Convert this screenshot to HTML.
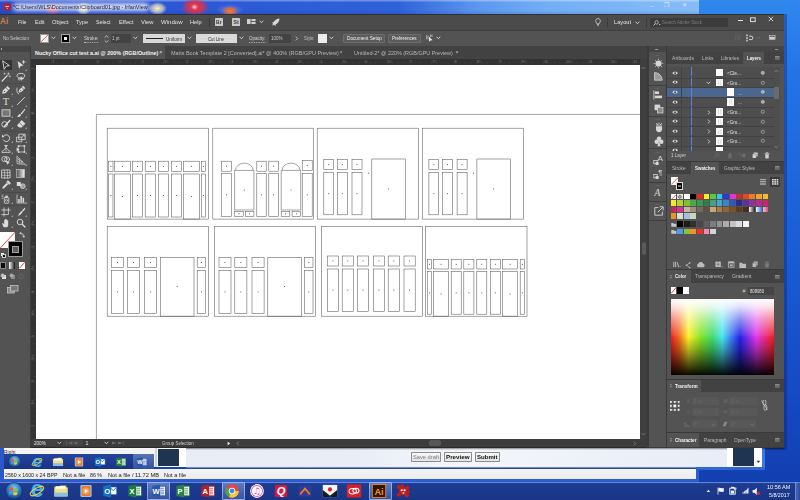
<!DOCTYPE html>
<html><head><meta charset="utf-8"><title>Clipboard01.jpg - IrfanView</title>
<style>
html,body{margin:0;padding:0;background:#1d55c4;}
#r{position:relative;width:800px;height:500px;overflow:hidden;font-family:"Liberation Sans",sans-serif;background:#1d55c4;}
#r div,#r svg{position:absolute;}
#r .t{white-space:nowrap;transform-origin:0 50%;}
</style></head><body><div id="r">
<div style="left:0.00px;top:0.00px;width:800.00px;height:500.00px;background:linear-gradient(180deg,#3088ee 0%,#2474e6 14%,#1a5ed6 48%,#1448c0 82%,#123ead 100%);"></div>
<div style="left:0.00px;top:0.00px;width:699.00px;height:14.50px;background:linear-gradient(90deg,#2a4ccc 0%,#2c58d6 30%,#2f62da 57%,#5a96ee 68%,#72aef6 78%,#86bcf8 100%);"></div>
<div style="left:0.00px;top:0.00px;width:699.00px;height:1.60px;background:linear-gradient(180deg,rgba(255,255,255,.38),rgba(255,255,255,.08));"></div>
<div style="left:0.00px;top:10.00px;width:699.00px;height:4.50px;background:linear-gradient(180deg,rgba(10,30,120,0),rgba(10,30,120,.18));"></div>
<div style="left:44.00px;top:3.00px;width:17.00px;height:12.00px;background:radial-gradient(closest-side,#e84870,#d8406890 60%,#c03c7000);"></div>
<div style="left:76.00px;top:2.00px;width:15.00px;height:13.00px;background:radial-gradient(closest-side,#f8f0c8,#f0e8b890 60%,#e8e0b000);"></div>
<div style="left:148.00px;top:2.00px;width:19.00px;height:13.00px;background:radial-gradient(closest-side,#f8f0c8,#f0e8b8a0 60%,#e8e0b000);"></div>
<div style="left:181.00px;top:-2.00px;width:28.00px;height:18.00px;background:radial-gradient(closest-side,#f03848,#e83040d0 55%,#d0304000);"></div>
<div style="left:191.00px;top:4.00px;width:7.00px;height:6.00px;background:radial-gradient(closest-side,#ffffffc0,#ffffff00);"></div>
<div style="left:216.00px;top:4.00px;width:28.00px;height:12.00px;background:radial-gradient(closest-side,#c8b8e070,#c0b0e000);"></div>
<div style="left:222.00px;top:6.00px;width:16.00px;height:10.00px;background:radial-gradient(closest-side,#f87830,#f06828c0 55%,#e0602000);"></div>
<div style="left:13.00px;top:3.20px;width:136.00px;height:7.60px;background:rgba(255,255,255,.78);border-radius:4px;filter:blur(2.2px);"></div>
<div class="t" style="left:13.00px;top:3.28px;height:7.44px;line-height:7.44px;font-size:6.2px;color:#101830;transform:scaleX(0.893);">*C:\Users\WLS\Documents\Clipboard01.jpg - IrfanView</div>
<div class="t" style="left:650.00px;top:2.90px;height:7.20px;line-height:7.20px;font-size:6px;color:#dfeeff;transform:scaleX(1.000);">–</div>
<div class="t" style="left:664.00px;top:2.40px;height:7.20px;line-height:7.20px;font-size:6px;color:#dfeeff;transform:scaleX(1.000);">❐</div>
<div class="t" style="left:682.00px;top:2.40px;height:7.20px;line-height:7.20px;font-size:6px;color:#dfeeff;transform:scaleX(1.000);">✕</div>
<div style="left:0.00px;top:14.00px;width:787.00px;height:436.00px;background:rgba(10,30,90,.35);"></div>
<div style="left:0.00px;top:14.20px;width:783.60px;height:433.40px;background:#535353;"></div>
<div style="left:0.00px;top:14.20px;width:783.60px;height:16.00px;background:#4b4b4b;"></div>
<div style="left:0.00px;top:14.20px;width:783.60px;height:0.70px;background:#303030;"></div>
<div style="left:0.00px;top:30.20px;width:783.60px;height:16.00px;background:#535353;border-top:0.5px solid #3e3e3e;"></div>
<div style="left:0.00px;top:46.20px;width:783.60px;height:401.40px;background:#3d3d3d;"></div>
<div class="t" style="left:0.00px;top:17.28px;height:9.84px;line-height:9.84px;font-size:8.2px;color:#c8825a;font-weight:bold;transform:scaleX(1.000);">Ai</div>
<div class="t" style="left:18.00px;top:18.70px;height:7.20px;line-height:7.20px;font-size:6px;color:#e4e4e4;transform:scaleX(0.879);">File</div>
<div class="t" style="left:34.50px;top:18.70px;height:7.20px;line-height:7.20px;font-size:6px;color:#e4e4e4;transform:scaleX(0.919);">Edit</div>
<div class="t" style="left:51.50px;top:18.70px;height:7.20px;line-height:7.20px;font-size:6px;color:#e4e4e4;transform:scaleX(0.952);">Object</div>
<div class="t" style="left:76.00px;top:18.70px;height:7.20px;line-height:7.20px;font-size:6px;color:#e4e4e4;transform:scaleX(0.923);">Type</div>
<div class="t" style="left:96.00px;top:18.70px;height:7.20px;line-height:7.20px;font-size:6px;color:#e4e4e4;transform:scaleX(0.870);">Select</div>
<div class="t" style="left:119.00px;top:18.70px;height:7.20px;line-height:7.20px;font-size:6px;color:#e4e4e4;transform:scaleX(0.952);">Effect</div>
<div class="t" style="left:141.00px;top:18.70px;height:7.20px;line-height:7.20px;font-size:6px;color:#e4e4e4;transform:scaleX(0.969);">View</div>
<div class="t" style="left:161.00px;top:18.70px;height:7.20px;line-height:7.20px;font-size:6px;color:#e4e4e4;transform:scaleX(1.008);">Window</div>
<div class="t" style="left:190.00px;top:18.70px;height:7.20px;line-height:7.20px;font-size:6px;color:#e4e4e4;transform:scaleX(0.932);">Help</div>
<div style="left:208.50px;top:18.00px;width:0.50px;height:9.00px;background:#3a3a3a;"></div>
<div style="left:215.00px;top:18.00px;width:8.20px;height:8.20px;background:#c9c9c9;border-radius:0.6px;"></div>
<div class="t" style="left:216.30px;top:19.18px;height:6.24px;line-height:6.24px;font-size:5.2px;color:#3a3a3a;font-weight:bold;transform:scaleX(0.969);">Br</div>
<div style="left:232.00px;top:18.00px;width:8.20px;height:8.20px;background:#c9c9c9;border-radius:0.6px;"></div>
<div class="t" style="left:233.60px;top:19.18px;height:6.24px;line-height:6.24px;font-size:5.2px;color:#3a3a3a;font-weight:bold;transform:scaleX(1.000);">St</div>
<svg style="left:247.00px;top:19.00px;" width="9" height="6" viewBox="0 0 9 6"><rect x="0" y="0" width="3.6" height="5" fill="#d0d0d0"/><rect x="4.4" y="0" width="4.2" height="2.1" fill="#d0d0d0"/><rect x="4.4" y="2.9" width="4.2" height="2.1" fill="#d0d0d0"/></svg>
<svg style="left:258.90px;top:20.00px;" width="5" height="4" viewBox="0 0 5 4"><path d="M0.5 0.8 L2.4 2.7 L4.3 0.8" fill="none" stroke="#e0e0e0" stroke-width="0.9"/></svg>
<svg style="left:270.50px;top:17.50px;" width="9" height="9" viewBox="0 0 9 9"><path d="M8.6 0.4 C6 0.6 3.6 2 2.2 4.4 L0.6 4.6 L2 5.6 L1.2 7.6 L3.4 6.8 L4.4 8.4 L4.6 6.6 C7 5.2 8.4 3 8.6 0.4 Z" fill="#d8d8d8"/></svg>
<svg style="left:594.50px;top:17.50px;" width="6" height="9" viewBox="0 0 6 9"><path d="M3 0.6 C1.4 0.6 0.6 1.8 0.6 2.9 C0.6 4 1.6 4.6 1.9 5.8 L4.1 5.8 C4.4 4.6 5.4 4 5.4 2.9 C5.4 1.8 4.6 0.6 3 0.6 Z" fill="none" stroke="#e0e0e0" stroke-width="0.7"/><path d="M2 6.6 L4 6.6 M2.4 7.6 L3.6 7.6" stroke="#e0e0e0" stroke-width="0.7"/></svg>
<div style="left:607.30px;top:17.50px;width:0.50px;height:10.00px;background:#3c3c3c;"></div>
<div class="t" style="left:613.80px;top:18.60px;height:7.20px;line-height:7.20px;font-size:6px;color:#e4e4e4;transform:scaleX(0.944);">Layout</div>
<svg style="left:635.20px;top:20.80px;" width="5" height="4" viewBox="0 0 5 4"><path d="M0.5 0.8 L2.4 2.7 L4.3 0.8" fill="none" stroke="#e0e0e0" stroke-width="0.9"/></svg>
<div style="left:645.50px;top:17.50px;width:0.50px;height:10.00px;background:#3c3c3c;"></div>
<div style="left:650.00px;top:18.00px;width:78.00px;height:9.00px;background:#3b3b3b;border-radius:0.5px;"></div>
<svg style="left:652.50px;top:19.50px;" width="8" height="6" viewBox="0 0 8 6"><circle cx="3.6" cy="2.4" r="1.7" fill="none" stroke="#d8d8d8" stroke-width="0.7"/><path d="M2.3 3.7 L0.5 5.5" stroke="#d8d8d8" stroke-width="0.8"/><path d="M5.8 4 L7.6 4 L6.7 5.2 Z" fill="#d8d8d8"/></svg>
<div class="t" style="left:661.50px;top:19.28px;height:6.24px;line-height:6.24px;font-size:5.2px;color:#7c7c7c;transform:scaleX(0.849);">Search Adobe Stock</div>
<div style="left:737.60px;top:20.20px;width:5.00px;height:1.20px;background:#e0e0e0;"></div>
<svg style="left:749.80px;top:16.60px;" width="6" height="6" viewBox="0 0 6 6"><rect x="0.6" y="0.8" width="4.6" height="3.8" fill="none" stroke="#e0e0e0" stroke-width="1"/></svg>
<svg style="left:767.80px;top:16.20px;" width="6" height="6" viewBox="0 0 6 6"><path d="M0.7 0.7 L5.1 5.1 M5.1 0.7 L0.7 5.1" stroke="#e4e4e4" stroke-width="0.9"/></svg>
<div class="t" style="left:3.00px;top:35.28px;height:6.24px;line-height:6.24px;font-size:5.2px;color:#c8c8c8;transform:scaleX(0.882);">No Selection</div>
<div style="left:40.00px;top:34.00px;width:9.00px;height:8.80px;background:#f8f8f8;border:0.4px solid #999;box-sizing:border-box;"></div>
<svg style="left:40.00px;top:34.00px;" width="9" height="9" viewBox="0 0 9 9"><path d="M0.6 8.2 L8.4 0.6" stroke="#d02020" stroke-width="0.7"/></svg>
<svg style="left:51.00px;top:36.40px;" width="5" height="4" viewBox="0 0 5 4"><path d="M0.5 0.8 L2.4 2.7 L4.3 0.8" fill="none" stroke="#e0e0e0" stroke-width="0.9"/></svg>
<div style="left:61.00px;top:33.80px;width:9.00px;height:9.00px;background:#000;border:0.5px solid #aaa;box-sizing:border-box;"></div>
<div style="left:64.20px;top:37.00px;width:2.60px;height:2.60px;background:#f0f0f0;"></div>
<svg style="left:71.80px;top:36.40px;" width="5" height="4" viewBox="0 0 5 4"><path d="M0.5 0.8 L2.4 2.7 L4.3 0.8" fill="none" stroke="#e0e0e0" stroke-width="0.9"/></svg>
<div class="t" style="left:84.00px;top:35.28px;height:6.24px;line-height:6.24px;font-size:5.2px;color:#d8d8d8;transform:scaleX(0.880);border-bottom:0.4px dotted #bbb;">Stroke:</div>
<svg style="left:103.50px;top:34.50px;" width="5" height="8" viewBox="0 0 5 8"><path d="M0.7 2.6 L2.5 0.8 L4.3 2.6 M0.7 5.4 L2.5 7.2 L4.3 5.4" fill="none" stroke="#d8d8d8" stroke-width="0.8"/></svg>
<div style="left:111.00px;top:34.00px;width:19.80px;height:8.60px;background:#434343;"></div>
<div class="t" style="left:112.30px;top:35.28px;height:6.24px;line-height:6.24px;font-size:5.2px;color:#c8c8c8;transform:scaleX(0.865);">1 pt</div>
<svg style="left:132.60px;top:36.40px;" width="5" height="4" viewBox="0 0 5 4"><path d="M0.5 0.8 L2.4 2.7 L4.3 0.8" fill="none" stroke="#e0e0e0" stroke-width="0.9"/></svg>
<div style="left:142.50px;top:33.80px;width:42.60px;height:9.40px;background:#d8d8d8;border-radius:0.5px;"></div>
<div style="left:145.50px;top:37.70px;width:17.50px;height:1.30px;background:#202020;"></div>
<div class="t" style="left:166.00px;top:35.60px;height:6.00px;line-height:6.00px;font-size:5px;color:#303030;transform:scaleX(0.914);">Uniform</div>
<svg style="left:186.80px;top:36.40px;" width="5" height="4" viewBox="0 0 5 4"><path d="M0.5 0.8 L2.4 2.7 L4.3 0.8" fill="none" stroke="#e0e0e0" stroke-width="0.9"/></svg>
<div style="left:196.00px;top:33.80px;width:41.00px;height:9.40px;background:#dadada;border-radius:0.5px;"></div>
<div class="t" style="left:208.00px;top:35.60px;height:6.00px;line-height:6.00px;font-size:5px;color:#303030;transform:scaleX(0.859);">Cut Line</div>
<svg style="left:238.80px;top:36.40px;" width="5" height="4" viewBox="0 0 5 4"><path d="M0.5 0.8 L2.4 2.7 L4.3 0.8" fill="none" stroke="#e0e0e0" stroke-width="0.9"/></svg>
<div class="t" style="left:249.00px;top:35.28px;height:6.24px;line-height:6.24px;font-size:5.2px;color:#d8d8d8;transform:scaleX(0.865);border-bottom:0.4px dotted #bbb;">Opacity:</div>
<div style="left:269.00px;top:34.00px;width:21.60px;height:8.60px;background:#434343;"></div>
<div class="t" style="left:270.60px;top:35.28px;height:6.24px;line-height:6.24px;font-size:5.2px;color:#c8c8c8;transform:scaleX(0.865);">100%</div>
<svg style="left:294.60px;top:36.00px;" width="4" height="5" viewBox="0 0 4 5"><path d="M0.8 0.6 L2.7 2.5 L0.8 4.4" fill="none" stroke="#d8d8d8" stroke-width="0.8"/></svg>
<div class="t" style="left:303.80px;top:35.28px;height:6.24px;line-height:6.24px;font-size:5.2px;color:#c0c0c0;transform:scaleX(0.800);">Style:</div>
<div style="left:318.00px;top:33.80px;width:9.20px;height:9.00px;background:#ececec;"></div>
<svg style="left:329.20px;top:36.40px;" width="5" height="4" viewBox="0 0 5 4"><path d="M0.5 0.8 L2.4 2.7 L4.3 0.8" fill="none" stroke="#e0e0e0" stroke-width="0.9"/></svg>
<div style="left:343.00px;top:33.80px;width:42.00px;height:9.20px;background:#5c5c5c;border:0.4px solid #6c6c6c;box-sizing:border-box;border-radius:1px;"></div>
<div class="t" style="left:346.60px;top:35.38px;height:6.24px;line-height:6.24px;font-size:5.2px;color:#f0f0f0;transform:scaleX(0.904);">Document Setup</div>
<div style="left:387.80px;top:33.80px;width:32.80px;height:9.20px;background:#5c5c5c;border:0.4px solid #6c6c6c;box-sizing:border-box;border-radius:1px;"></div>
<div class="t" style="left:392.00px;top:35.38px;height:6.24px;line-height:6.24px;font-size:5.2px;color:#f0f0f0;transform:scaleX(0.877);">Preferences</div>
<svg style="left:426.00px;top:34.00px;" width="8" height="9" viewBox="0 0 8 9"><path d="M0.6 1.4 L0.6 5.4 M2 1.4 L2 5.4 M4.6 0.4 L4.6 3 M6 0.4 L6 3" stroke="#cfcfcf" stroke-width="0.7"/><path d="M3 2.6 L3 7.8 L4.4 6.4 L6.6 6.2 Z" fill="#e6e6e6"/></svg>
<svg style="left:435.80px;top:35.60px;" width="5" height="4" viewBox="0 0 5 4"><path d="M0.5 0.8 L2.4 2.7 L4.3 0.8" fill="none" stroke="#e0e0e0" stroke-width="0.9"/></svg>
<svg style="left:734.50px;top:34.00px;" width="6" height="7" viewBox="0 0 6 7"><path d="M0.8 0.6 V6.4 M3 0.6 V6.4" stroke="#6c6c6c" stroke-width="0.8" stroke-dasharray="1.2 1"/><path d="M4.6 0.6 V6.4" stroke="#6c6c6c" stroke-width="0.6"/></svg>
<svg style="left:746.00px;top:33.80px;" width="9" height="8" viewBox="0 0 9 8"><path d="M1 0.6 V7.4" stroke="#e4e4e4" stroke-width="1.3" stroke-dasharray="1.7 0.9"/><path d="M3 2.2 H5.2 A1.7 1.7 0 0 1 5.2 5.6 H3" fill="none" stroke="#e4e4e4" stroke-width="0.9"/></svg>
<svg style="left:756.20px;top:35.60px;" width="5" height="4" viewBox="0 0 5 4"><path d="M0.5 0.8 L2.4 2.7 L4.3 0.8" fill="none" stroke="#777" stroke-width="0.9"/></svg>
<svg style="left:769.00px;top:35.20px;" width="7" height="5" viewBox="0 0 7 5"><rect x="0.3" y="0.3" width="5.8" height="4" fill="none" stroke="#d8d8d8" stroke-width="0.6"/><rect x="0.6" y="1.8" width="5.2" height="2.4" fill="#d0d0d0"/></svg>
<div style="left:0.00px;top:46.20px;width:29.50px;height:401.40px;background:#535353;"></div>
<div style="left:0.00px;top:46.20px;width:29.50px;height:5.60px;background:#454545;"></div>
<div style="left:1.20px;top:48.00px;width:0.50px;height:1.60px;background:#aaa;"></div>
<div style="left:0.00px;top:60.40px;width:12.00px;height:9.80px;background:#353535;"></div>
<div style="left:31.00px;top:46.20px;width:616.00px;height:13.20px;background:#424242;"></div>
<div style="left:31.00px;top:46.20px;width:134.00px;height:13.20px;background:#535353;"></div>
<div class="t" style="left:35.00px;top:49.66px;height:6.48px;line-height:6.48px;font-size:5.4px;color:#f2f2f2;font-weight:bold;transform:scaleX(1.000);">Nucky Office cut test a.ai @ 200% (RGB/Outline)</div>
<div class="t" style="left:159.30px;top:48.60px;height:6.00px;line-height:6.00px;font-size:5px;color:#e0e0e0;transform:scaleX(1.000);">×</div>
<div class="t" style="left:170.50px;top:49.66px;height:6.48px;line-height:6.48px;font-size:5.4px;color:#b8b8b8;transform:scaleX(1.018);">Matts Book Template 2 [Converted].ai* @ 400% (RGB/GPU Preview)</div>
<div class="t" style="left:339.60px;top:48.60px;height:6.00px;line-height:6.00px;font-size:5px;color:#b8b8b8;transform:scaleX(1.000);">×</div>
<div class="t" style="left:354.00px;top:49.66px;height:6.48px;line-height:6.48px;font-size:5.4px;color:#b8b8b8;transform:scaleX(1.008);">Untitled-2* @ 220% (RGB/GPU Preview)</div>
<div class="t" style="left:455.60px;top:48.80px;height:6.00px;line-height:6.00px;font-size:5px;color:#c8c8c8;transform:scaleX(1.000);">×</div>
<div style="left:31.00px;top:59.40px;width:609.20px;height:5.20px;background:#333333;"></div>
<div style="left:31.00px;top:59.40px;width:4.80px;height:379.60px;background:#333333;"></div>
<div style="left:35.80px;top:64.60px;width:604.40px;height:374.40px;background:#ffffff;"></div>
<div style="left:640.20px;top:59.40px;width:6.80px;height:387.40px;background:#3f3f3f;"></div>
<div style="left:31.00px;top:439.00px;width:616.00px;height:7.80px;background:#3c3c3c;"></div>
<div style="left:31.00px;top:446.80px;width:752.60px;height:0.80px;background:#2a2a2a;"></div>
<svg style="left:641.00px;top:66.00px;" width="5" height="4" viewBox="0 0 5 4"><path d="M0.5 3 L2.4 1.1 L4.3 3" fill="none" stroke="#8a8a8a" stroke-width="0.7"/></svg>
<svg style="left:641.00px;top:432.00px;" width="5" height="4" viewBox="0 0 5 4"><path d="M0.5 1 L2.4 2.9 L4.3 1" fill="none" stroke="#8a8a8a" stroke-width="0.7"/></svg>
<div style="left:641.60px;top:242.00px;width:4.00px;height:12.50px;background:#5a5a5a;border-radius:2px;"></div>
<div style="left:429.00px;top:440.40px;width:12.00px;height:5.20px;background:#585858;border-radius:2.6px;"></div>
<svg style="left:633.00px;top:440.60px;" width="4" height="5" viewBox="0 0 4 5"><path d="M0.8 0.6 L2.7 2.5 L0.8 4.4" fill="none" stroke="#8a8a8a" stroke-width="0.7"/></svg>
<div style="left:32.00px;top:439.60px;width:25.00px;height:6.80px;background:#424242;"></div>
<div class="t" style="left:33.80px;top:440.38px;height:6.24px;line-height:6.24px;font-size:5.2px;color:#e8e8e8;transform:scaleX(0.887);">200%</div>
<svg style="left:57.40px;top:441.40px;" width="5" height="4" viewBox="0 0 5 4"><path d="M0.5 0.8 L2.4 2.7 L4.3 0.8" fill="none" stroke="#e0e0e0" stroke-width="0.9"/></svg>
<div style="left:63.00px;top:439.60px;width:19.50px;height:6.60px;background:#464646;"></div>
<div class="t" style="left:66.00px;top:440.48px;height:5.04px;line-height:5.04px;font-size:4.2px;color:#6a6a6a;transform:scaleX(1.402);">|◀ ◀</div>
<div class="t" style="left:85.60px;top:440.38px;height:6.24px;line-height:6.24px;font-size:5.2px;color:#e8e8e8;transform:scaleX(1.000);">1</div>
<svg style="left:104.40px;top:441.40px;" width="5" height="4" viewBox="0 0 5 4"><path d="M0.5 0.8 L2.4 2.7 L4.3 0.8" fill="none" stroke="#e0e0e0" stroke-width="0.9"/></svg>
<div class="t" style="left:112.00px;top:440.48px;height:5.04px;line-height:5.04px;font-size:4.2px;color:#6a6a6a;transform:scaleX(1.519);">▶ ▶|</div>
<div class="t" style="left:162.00px;top:440.00px;height:6.00px;line-height:6.00px;font-size:5px;color:#d0d0d0;transform:scaleX(0.881);">Group Selection</div>
<svg style="left:227.20px;top:440.60px;" width="4" height="5" viewBox="0 0 4 5"><path d="M0.6 0.4 L3.2 2.5 L0.6 4.6 Z" fill="#e4e4e4"/></svg>
<svg style="left:235.60px;top:440.60px;" width="4" height="5" viewBox="0 0 4 5"><path d="M2.8 0.6 L1 2.5 L2.8 4.4" fill="none" stroke="#a0a0a0" stroke-width="0.7"/></svg>
<svg style="left:0.00px;top:0.00px;" width="800" height="500" viewBox="0 0 800 500"><g fill="none" stroke="#5a5a5a" stroke-width="0.55"><path d="M96.4 439 V114.4 H640.2"/><rect x="107.20" y="128.20" width="101.30" height="90.90"/><rect x="108.70" y="161.20" width="4.30" height="10.40"/><rect x="110.40" y="165.95" width="0.9" height="0.9" fill="#3a3a3a" stroke="none"/><rect x="108.70" y="174.00" width="4.30" height="43.00"/><rect x="110.40" y="195.05" width="0.9" height="0.9" fill="#3a3a3a" stroke="none"/><rect x="114.40" y="161.20" width="15.90" height="10.40"/><rect x="121.90" y="165.95" width="0.9" height="0.9" fill="#3a3a3a" stroke="none"/><rect x="114.40" y="174.00" width="15.90" height="45.10"/><rect x="121.90" y="196.10" width="0.9" height="0.9" fill="#3a3a3a" stroke="none"/><rect x="132.30" y="161.20" width="10.30" height="10.40"/><rect x="137.00" y="165.95" width="0.9" height="0.9" fill="#3a3a3a" stroke="none"/><rect x="132.30" y="174.00" width="10.30" height="43.00"/><rect x="137.00" y="195.05" width="0.9" height="0.9" fill="#3a3a3a" stroke="none"/><rect x="145.20" y="161.20" width="10.40" height="10.40"/><rect x="149.95" y="165.95" width="0.9" height="0.9" fill="#3a3a3a" stroke="none"/><rect x="145.20" y="174.00" width="10.40" height="43.00"/><rect x="149.95" y="195.05" width="0.9" height="0.9" fill="#3a3a3a" stroke="none"/><rect x="158.40" y="161.20" width="10.10" height="10.40"/><rect x="163.00" y="165.95" width="0.9" height="0.9" fill="#3a3a3a" stroke="none"/><rect x="158.40" y="174.00" width="10.10" height="43.00"/><rect x="163.00" y="195.05" width="0.9" height="0.9" fill="#3a3a3a" stroke="none"/><rect x="171.40" y="161.20" width="10.00" height="10.40"/><rect x="175.95" y="165.95" width="0.9" height="0.9" fill="#3a3a3a" stroke="none"/><rect x="171.40" y="174.00" width="10.00" height="43.00"/><rect x="175.95" y="195.05" width="0.9" height="0.9" fill="#3a3a3a" stroke="none"/><rect x="183.40" y="161.20" width="15.90" height="10.40"/><rect x="190.90" y="165.95" width="0.9" height="0.9" fill="#3a3a3a" stroke="none"/><rect x="183.40" y="174.00" width="15.90" height="45.10"/><rect x="190.90" y="196.10" width="0.9" height="0.9" fill="#3a3a3a" stroke="none"/><rect x="201.30" y="161.20" width="4.30" height="10.40"/><rect x="203.00" y="165.95" width="0.9" height="0.9" fill="#3a3a3a" stroke="none"/><rect x="201.30" y="174.00" width="4.30" height="43.00"/><rect x="203.00" y="195.05" width="0.9" height="0.9" fill="#3a3a3a" stroke="none"/><rect x="212.80" y="128.20" width="100.90" height="90.90"/><rect x="221.40" y="161.20" width="10.10" height="10.00"/><rect x="226.00" y="165.75" width="0.9" height="0.9" fill="#3a3a3a" stroke="none"/><rect x="221.40" y="173.40" width="10.10" height="42.90"/><rect x="226.00" y="194.40" width="0.9" height="0.9" fill="#3a3a3a" stroke="none"/><rect x="256.80" y="161.20" width="9.40" height="10.00"/><rect x="261.05" y="165.75" width="0.9" height="0.9" fill="#3a3a3a" stroke="none"/><rect x="256.80" y="173.40" width="9.40" height="42.90"/><rect x="261.05" y="194.40" width="0.9" height="0.9" fill="#3a3a3a" stroke="none"/><rect x="268.80" y="161.20" width="9.50" height="10.00"/><rect x="273.10" y="165.75" width="0.9" height="0.9" fill="#3a3a3a" stroke="none"/><rect x="268.80" y="173.40" width="9.50" height="42.90"/><rect x="273.10" y="194.40" width="0.9" height="0.9" fill="#3a3a3a" stroke="none"/><rect x="302.20" y="160.60" width="10.00" height="10.00"/><rect x="306.75" y="165.15" width="0.9" height="0.9" fill="#3a3a3a" stroke="none"/><rect x="302.20" y="173.40" width="10.00" height="42.90"/><rect x="306.75" y="194.40" width="0.9" height="0.9" fill="#3a3a3a" stroke="none"/><path d="M234.6 170.4 H253.9 V210 H234.6 Z"/><path d="M235.50 170.4 A8.85 7.3 0 0 1 253.20 170.4"/><rect x="243.80" y="189.55" width="0.9" height="0.9" fill="#3a3a3a" stroke="none"/><rect x="234.60" y="211.40" width="8.60" height="4.90"/><rect x="238.45" y="213.40" width="0.9" height="0.9" fill="#3a3a3a" stroke="none"/><rect x="245.30" y="211.40" width="8.60" height="4.90"/><rect x="249.15" y="213.40" width="0.9" height="0.9" fill="#3a3a3a" stroke="none"/><path d="M281.2 170.4 H300.7 V210 H281.2 Z"/><path d="M282.10 170.4 A8.95 7.3 0 0 1 300.00 170.4"/><rect x="290.50" y="189.55" width="0.9" height="0.9" fill="#3a3a3a" stroke="none"/><rect x="281.20" y="211.40" width="8.60" height="4.90"/><rect x="285.05" y="213.40" width="0.9" height="0.9" fill="#3a3a3a" stroke="none"/><rect x="292.10" y="211.40" width="8.60" height="4.90"/><rect x="295.95" y="213.40" width="0.9" height="0.9" fill="#3a3a3a" stroke="none"/><rect x="317.20" y="128.20" width="101.50" height="90.90"/><rect x="323.80" y="159.60" width="9.80" height="10.10"/><rect x="328.25" y="164.20" width="0.9" height="0.9" fill="#3a3a3a" stroke="none"/><rect x="323.80" y="172.60" width="9.80" height="42.20"/><rect x="328.25" y="193.25" width="0.9" height="0.9" fill="#3a3a3a" stroke="none"/><rect x="337.30" y="159.60" width="10.10" height="10.10"/><rect x="341.90" y="164.20" width="0.9" height="0.9" fill="#3a3a3a" stroke="none"/><rect x="337.30" y="172.60" width="10.10" height="42.20"/><rect x="341.90" y="193.25" width="0.9" height="0.9" fill="#3a3a3a" stroke="none"/><rect x="352.00" y="159.60" width="10.00" height="10.10"/><rect x="356.55" y="164.20" width="0.9" height="0.9" fill="#3a3a3a" stroke="none"/><rect x="352.00" y="172.60" width="10.00" height="42.20"/><rect x="356.55" y="193.25" width="0.9" height="0.9" fill="#3a3a3a" stroke="none"/><rect x="371.80" y="159.00" width="33.70" height="60.10"/><rect x="388.15" y="188.55" width="0.9" height="0.9" fill="#3a3a3a" stroke="none"/><rect x="367.95" y="172.75" width="0.9" height="0.9" fill="#3a3a3a" stroke="none"/><rect x="422.70" y="128.20" width="100.90" height="90.90"/><rect x="428.90" y="159.60" width="9.80" height="10.10"/><rect x="433.35" y="164.20" width="0.9" height="0.9" fill="#3a3a3a" stroke="none"/><rect x="428.90" y="172.60" width="9.80" height="42.20"/><rect x="433.35" y="193.25" width="0.9" height="0.9" fill="#3a3a3a" stroke="none"/><rect x="442.40" y="159.60" width="10.10" height="10.10"/><rect x="447.00" y="164.20" width="0.9" height="0.9" fill="#3a3a3a" stroke="none"/><rect x="442.40" y="172.60" width="10.10" height="42.20"/><rect x="447.00" y="193.25" width="0.9" height="0.9" fill="#3a3a3a" stroke="none"/><rect x="457.10" y="159.60" width="10.00" height="10.10"/><rect x="461.65" y="164.20" width="0.9" height="0.9" fill="#3a3a3a" stroke="none"/><rect x="457.10" y="172.60" width="10.00" height="42.20"/><rect x="461.65" y="193.25" width="0.9" height="0.9" fill="#3a3a3a" stroke="none"/><rect x="476.90" y="159.00" width="33.70" height="60.10"/><rect x="493.25" y="188.55" width="0.9" height="0.9" fill="#3a3a3a" stroke="none"/><rect x="473.05" y="172.75" width="0.9" height="0.9" fill="#3a3a3a" stroke="none"/><rect x="107.20" y="226.50" width="101.30" height="89.70"/><rect x="111.60" y="257.60" width="12.00" height="9.70"/><rect x="117.15" y="262.00" width="0.9" height="0.9" fill="#3a3a3a" stroke="none"/><rect x="111.60" y="270.50" width="12.00" height="42.80"/><rect x="117.15" y="291.45" width="0.9" height="0.9" fill="#3a3a3a" stroke="none"/><rect x="127.40" y="257.60" width="12.10" height="9.70"/><rect x="133.00" y="262.00" width="0.9" height="0.9" fill="#3a3a3a" stroke="none"/><rect x="127.40" y="270.50" width="12.10" height="42.80"/><rect x="133.00" y="291.45" width="0.9" height="0.9" fill="#3a3a3a" stroke="none"/><rect x="144.60" y="257.60" width="12.10" height="9.70"/><rect x="150.20" y="262.00" width="0.9" height="0.9" fill="#3a3a3a" stroke="none"/><rect x="144.60" y="270.50" width="12.10" height="42.80"/><rect x="150.20" y="291.45" width="0.9" height="0.9" fill="#3a3a3a" stroke="none"/><rect x="197.20" y="257.60" width="8.40" height="9.70"/><rect x="200.95" y="262.00" width="0.9" height="0.9" fill="#3a3a3a" stroke="none"/><rect x="197.20" y="270.50" width="8.40" height="42.80"/><rect x="200.95" y="291.45" width="0.9" height="0.9" fill="#3a3a3a" stroke="none"/><rect x="160.40" y="257.60" width="33.60" height="58.60"/><rect x="176.75" y="286.05" width="0.9" height="0.9" fill="#3a3a3a" stroke="none"/><rect x="214.50" y="226.50" width="101.20" height="89.70"/><rect x="219.00" y="257.60" width="12.00" height="9.70"/><rect x="224.55" y="262.00" width="0.9" height="0.9" fill="#3a3a3a" stroke="none"/><rect x="219.00" y="270.50" width="12.00" height="42.80"/><rect x="224.55" y="291.45" width="0.9" height="0.9" fill="#3a3a3a" stroke="none"/><rect x="234.80" y="257.60" width="12.10" height="9.70"/><rect x="240.40" y="262.00" width="0.9" height="0.9" fill="#3a3a3a" stroke="none"/><rect x="234.80" y="270.50" width="12.10" height="42.80"/><rect x="240.40" y="291.45" width="0.9" height="0.9" fill="#3a3a3a" stroke="none"/><rect x="252.00" y="257.60" width="12.10" height="9.70"/><rect x="257.60" y="262.00" width="0.9" height="0.9" fill="#3a3a3a" stroke="none"/><rect x="252.00" y="270.50" width="12.10" height="42.80"/><rect x="257.60" y="291.45" width="0.9" height="0.9" fill="#3a3a3a" stroke="none"/><rect x="304.60" y="257.60" width="8.40" height="9.70"/><rect x="308.35" y="262.00" width="0.9" height="0.9" fill="#3a3a3a" stroke="none"/><rect x="304.60" y="270.50" width="8.40" height="42.80"/><rect x="308.35" y="291.45" width="0.9" height="0.9" fill="#3a3a3a" stroke="none"/><rect x="267.80" y="257.60" width="33.60" height="58.60"/><rect x="284.15" y="286.05" width="0.9" height="0.9" fill="#3a3a3a" stroke="none"/><rect x="321.50" y="226.50" width="101.20" height="89.70"/><rect x="327.30" y="256.00" width="11.20" height="10.00"/><rect x="332.45" y="260.55" width="0.9" height="0.9" fill="#3a3a3a" stroke="none"/><rect x="327.30" y="269.00" width="11.20" height="42.30"/><rect x="332.45" y="289.70" width="0.9" height="0.9" fill="#3a3a3a" stroke="none"/><rect x="342.20" y="256.00" width="11.20" height="10.00"/><rect x="347.35" y="260.55" width="0.9" height="0.9" fill="#3a3a3a" stroke="none"/><rect x="342.20" y="269.00" width="11.20" height="42.30"/><rect x="347.35" y="289.70" width="0.9" height="0.9" fill="#3a3a3a" stroke="none"/><rect x="357.40" y="256.00" width="11.30" height="10.00"/><rect x="362.60" y="260.55" width="0.9" height="0.9" fill="#3a3a3a" stroke="none"/><rect x="357.40" y="269.00" width="11.30" height="42.30"/><rect x="362.60" y="289.70" width="0.9" height="0.9" fill="#3a3a3a" stroke="none"/><rect x="373.30" y="256.00" width="11.20" height="10.00"/><rect x="378.45" y="260.55" width="0.9" height="0.9" fill="#3a3a3a" stroke="none"/><rect x="373.30" y="269.00" width="11.20" height="42.30"/><rect x="378.45" y="289.70" width="0.9" height="0.9" fill="#3a3a3a" stroke="none"/><rect x="388.20" y="256.00" width="11.20" height="10.00"/><rect x="393.35" y="260.55" width="0.9" height="0.9" fill="#3a3a3a" stroke="none"/><rect x="388.20" y="269.00" width="11.20" height="42.30"/><rect x="393.35" y="289.70" width="0.9" height="0.9" fill="#3a3a3a" stroke="none"/><rect x="404.00" y="256.00" width="11.20" height="10.00"/><rect x="409.15" y="260.55" width="0.9" height="0.9" fill="#3a3a3a" stroke="none"/><rect x="404.00" y="269.00" width="11.20" height="42.30"/><rect x="409.15" y="289.70" width="0.9" height="0.9" fill="#3a3a3a" stroke="none"/><rect x="425.60" y="226.50" width="101.40" height="89.70"/><rect x="427.30" y="259.60" width="4.30" height="9.40"/><rect x="429.00" y="263.85" width="0.9" height="0.9" fill="#3a3a3a" stroke="none"/><rect x="427.30" y="271.60" width="4.30" height="42.60"/><rect x="429.00" y="292.45" width="0.9" height="0.9" fill="#3a3a3a" stroke="none"/><rect x="433.60" y="259.60" width="15.00" height="9.40"/><rect x="440.65" y="263.85" width="0.9" height="0.9" fill="#3a3a3a" stroke="none"/><rect x="433.60" y="271.60" width="15.00" height="44.60"/><rect x="440.65" y="293.45" width="0.9" height="0.9" fill="#3a3a3a" stroke="none"/><rect x="451.20" y="259.60" width="10.00" height="9.40"/><rect x="455.75" y="263.85" width="0.9" height="0.9" fill="#3a3a3a" stroke="none"/><rect x="451.20" y="271.60" width="10.00" height="42.60"/><rect x="455.75" y="292.45" width="0.9" height="0.9" fill="#3a3a3a" stroke="none"/><rect x="463.80" y="259.60" width="10.10" height="9.40"/><rect x="468.40" y="263.85" width="0.9" height="0.9" fill="#3a3a3a" stroke="none"/><rect x="463.80" y="271.60" width="10.10" height="42.60"/><rect x="468.40" y="292.45" width="0.9" height="0.9" fill="#3a3a3a" stroke="none"/><rect x="476.80" y="259.60" width="10.00" height="9.40"/><rect x="481.35" y="263.85" width="0.9" height="0.9" fill="#3a3a3a" stroke="none"/><rect x="476.80" y="271.60" width="10.00" height="42.60"/><rect x="481.35" y="292.45" width="0.9" height="0.9" fill="#3a3a3a" stroke="none"/><rect x="490.30" y="259.60" width="10.00" height="9.40"/><rect x="494.85" y="263.85" width="0.9" height="0.9" fill="#3a3a3a" stroke="none"/><rect x="490.30" y="271.60" width="10.00" height="42.60"/><rect x="494.85" y="292.45" width="0.9" height="0.9" fill="#3a3a3a" stroke="none"/><rect x="502.60" y="259.60" width="15.00" height="9.40"/><rect x="509.65" y="263.85" width="0.9" height="0.9" fill="#3a3a3a" stroke="none"/><rect x="502.60" y="271.60" width="15.00" height="44.60"/><rect x="509.65" y="293.45" width="0.9" height="0.9" fill="#3a3a3a" stroke="none"/><rect x="520.20" y="259.60" width="4.30" height="9.40"/><rect x="521.90" y="263.85" width="0.9" height="0.9" fill="#3a3a3a" stroke="none"/><rect x="520.20" y="271.60" width="4.30" height="42.60"/><rect x="521.90" y="292.45" width="0.9" height="0.9" fill="#3a3a3a" stroke="none"/></g></svg>
<div style="left:647.00px;top:46.20px;width:136.60px;height:401.40px;background:#3a3a3a;"></div>
<div style="left:648.50px;top:46.20px;width:17.60px;height:5.60px;background:#454545;"></div>
<div style="left:648.50px;top:52.00px;width:17.60px;height:394.80px;background:#535353;"></div>
<div style="left:654.50px;top:48.60px;width:3.60px;height:0.80px;background:#999;"></div>
<div style="left:648.50px;top:84.60px;width:17.60px;height:0.80px;background:#3e3e3e;"></div>
<div style="left:648.50px;top:116.00px;width:17.60px;height:0.80px;background:#3e3e3e;"></div>
<div style="left:648.50px;top:148.40px;width:17.60px;height:0.80px;background:#3e3e3e;"></div>
<div style="left:648.50px;top:182.00px;width:17.60px;height:0.80px;background:#3e3e3e;"></div>
<div style="left:648.50px;top:200.80px;width:17.60px;height:0.80px;background:#3e3e3e;"></div>
<div style="left:648.50px;top:219.60px;width:17.60px;height:0.80px;background:#3e3e3e;"></div>
<div style="left:654.60px;top:55.00px;width:5.00px;height:0.60px;background:#606060;"></div>
<div style="left:654.60px;top:87.50px;width:5.00px;height:0.60px;background:#606060;"></div>
<div style="left:654.60px;top:119.00px;width:5.00px;height:0.60px;background:#606060;"></div>
<div style="left:654.60px;top:151.50px;width:5.00px;height:0.60px;background:#606060;"></div>
<div style="left:654.60px;top:185.00px;width:5.00px;height:0.60px;background:#606060;"></div>
<div style="left:654.60px;top:204.00px;width:5.00px;height:0.60px;background:#606060;"></div>
<svg style="left:652.50px;top:57.50px;" width="11" height="11" viewBox="0 0 11 11"><circle cx="5.5" cy="5.5" r="3.1" fill="#d6d6d6"/><g stroke="#d6d6d6" stroke-width="0.7"><path d="M5.5 0.6V1.8M5.5 9.2V10.4M0.6 5.5H1.8M9.2 5.5H10.4M2 2L2.9 2.9M8.1 8.1L9 9M2 9L2.9 8.1M8.1 2.9L9 2"/></g></svg>
<svg style="left:653.50px;top:71.50px;" width="9" height="9" viewBox="0 0 9 9"><path d="M0.6 0.6 A7.6 7.6 0 0 1 8.2 8.2 L0.6 8.2 Z" fill="#9c9c9c" stroke="#d6d6d6" stroke-width="0.8"/></svg>
<svg style="left:653.20px;top:90.00px;" width="10" height="10" viewBox="0 0 10 10"><path d="M0.8 0.4V9.6" stroke="#d6d6d6" stroke-width="0.8"/><rect x="1.8" y="1.4" width="4.2" height="2.6" fill="#d6d6d6"/><rect x="1.8" y="5.6" width="7.2" height="2.6" fill="#d6d6d6"/></svg>
<svg style="left:653.50px;top:103.50px;" width="10" height="10" viewBox="0 0 10 10"><rect x="0.6" y="0.6" width="5.6" height="5.6" fill="#d6d6d6"/><rect x="3.4" y="3.4" width="5.6" height="5.6" fill="#8a8a8a" stroke="#d6d6d6" stroke-width="0.7"/></svg>
<svg style="left:653.50px;top:122.00px;" width="10" height="11" viewBox="0 0 10 11"><path d="M2 4.2H8V7.2C8 9 6.6 10.2 5 10.2C3.4 10.2 2 9 2 7.2Z" fill="#d6d6d6"/><path d="M3 4V1.2M5 4V0.4M7 4V2M4 3.2L2.4 1.6M6 3.2L8 1" stroke="#d6d6d6" stroke-width="0.8"/></svg>
<svg style="left:653.50px;top:135.50px;" width="10" height="11" viewBox="0 0 10 11"><circle cx="5" cy="2.8" r="2.2" fill="#d6d6d6"/><circle cx="2.7" cy="5.8" r="2.2" fill="#d6d6d6"/><circle cx="7.3" cy="5.8" r="2.2" fill="#d6d6d6"/><path d="M5 5L3.4 10.2H6.6Z" fill="#d6d6d6"/></svg>
<svg style="left:652.50px;top:154.50px;" width="12" height="11" viewBox="0 0 12 11"><rect x="0.8" y="5.4" width="3.4" height="3.4" fill="none" stroke="#d6d6d6" stroke-width="0.8"/><rect x="2.6" y="7" width="3" height="3" fill="#d6d6d6"/></svg>
<div class="t" style="left:657.60px;top:153.60px;height:9.60px;line-height:9.60px;font-size:8px;color:#d6d6d6;transform:scaleX(1.000);">A</div>
<svg style="left:652.50px;top:168.50px;" width="12" height="11" viewBox="0 0 12 11"><rect x="0.8" y="5.4" width="3.4" height="3.4" fill="none" stroke="#d6d6d6" stroke-width="0.8"/><rect x="2.6" y="7" width="3" height="3" fill="#d6d6d6"/></svg>
<div class="t" style="left:658.20px;top:167.70px;height:9.00px;line-height:9.00px;font-size:7.5px;color:#d6d6d6;transform:scaleX(1.000);">¶</div>
<div class="t" style="left:654.20px;top:187.00px;height:12.00px;line-height:12.00px;font-size:10px;color:#d6d6d6;transform:scaleX(1.000);font-family:'Liberation Serif',serif;font-style:italic;">A</div>
<svg style="left:653.50px;top:206.00px;" width="10" height="10" viewBox="0 0 10 10"><path d="M4.4 1.6H0.8V9.2H8.4V5.6" fill="none" stroke="#d6d6d6" stroke-width="0.9"/><path d="M3.8 6.2L8.8 1.2M5.6 0.8H9.2V4.4" fill="none" stroke="#d6d6d6" stroke-width="0.9"/></svg>
<div style="left:667.40px;top:46.20px;width:116.20px;height:5.60px;background:#454545;"></div>
<div style="left:774.50px;top:48.60px;width:3.60px;height:0.80px;background:#999;"></div>
<div style="left:667.40px;top:51.80px;width:116.20px;height:109.00px;background:#535353;"></div>
<div style="left:667.40px;top:51.80px;width:116.20px;height:12.60px;background:#424242;"></div>
<div class="t" style="left:672.00px;top:54.94px;height:6.72px;line-height:6.72px;font-size:5.6px;color:#bdbdbd;transform:scaleX(0.906);">Artboards</div>
<div class="t" style="left:701.50px;top:54.94px;height:6.72px;line-height:6.72px;font-size:5.6px;color:#bdbdbd;transform:scaleX(0.880);">Links</div>
<div class="t" style="left:721.00px;top:54.94px;height:6.72px;line-height:6.72px;font-size:5.6px;color:#bdbdbd;transform:scaleX(0.838);">Libraries</div>
<div style="left:743.00px;top:51.80px;width:21.00px;height:12.60px;background:#535353;"></div>
<div class="t" style="left:747.00px;top:54.94px;height:6.72px;line-height:6.72px;font-size:5.6px;color:#f4f4f4;font-weight:bold;transform:scaleX(0.775);">Layers</div>
<svg style="left:775.00px;top:56.30px;" width="5" height="4" viewBox="0 0 5 4"><path d="M0 0.5H4.6M0 1.8H4.6M0 3.1H4.6" stroke="#a8a8a8" stroke-width="0.7"/></svg>
<div style="left:667.40px;top:67.40px;width:106.20px;height:83.40px;background:#4e4e4e;"></div>
<div style="left:667.40px;top:87.40px;width:106.20px;height:9.60px;background:#4b668f;"></div>
<div style="left:667.40px;top:77.50px;width:106.20px;height:0.50px;background:#424242;"></div>
<div style="left:667.40px;top:87.30px;width:106.20px;height:0.50px;background:#424242;"></div>
<div style="left:667.40px;top:97.00px;width:106.20px;height:0.50px;background:#424242;"></div>
<div style="left:667.40px;top:106.80px;width:106.20px;height:0.50px;background:#424242;"></div>
<div style="left:667.40px;top:116.70px;width:106.20px;height:0.50px;background:#424242;"></div>
<div style="left:667.40px;top:126.40px;width:106.20px;height:0.50px;background:#424242;"></div>
<div style="left:667.40px;top:136.30px;width:106.20px;height:0.50px;background:#424242;"></div>
<div style="left:667.40px;top:146.00px;width:106.20px;height:0.50px;background:#424242;"></div>
<div style="left:681.00px;top:67.40px;width:0.50px;height:83.40px;background:#424242;"></div>
<div style="left:690.80px;top:67.40px;width:1.10px;height:83.40px;background:repeating-linear-gradient(180deg,#5482ea 0,#5482ea 8.4px,rgba(84,130,234,.25) 8.4px,rgba(84,130,234,.25) 9.8px);background-position:0 0.9px;"></div>
<svg style="left:672.30px;top:70.50px;" width="6.4" height="4.6" viewBox="0 0 6.4 4.6"><path d="M0.3 2.2 C1.6 0.3 4.6 0.3 5.9 2.2 C4.6 4.1 1.6 4.1 0.3 2.2 Z" fill="#d8d8d8"/><circle cx="3.1" cy="2.2" r="1" fill="#4a4a4a"/></svg>
<div style="left:715.80px;top:68.90px;width:7.60px;height:7.60px;background:#fbfbfb;"></div>
<div class="t" style="left:726.80px;top:69.78px;height:6.24px;line-height:6.24px;font-size:5.2px;color:#e0e0e0;transform:scaleX(0.923);">&lt;Cle...</div>
<svg style="left:759.60px;top:69.90px;" width="5.6" height="5.6" viewBox="0 0 5.6 5.6"><circle cx="2.8" cy="2.8" r="1.6" fill="#a8a8a8" stroke="#d0d0d0" stroke-width="0.55"/></svg>
<svg style="left:672.30px;top:80.30px;" width="6.4" height="4.6" viewBox="0 0 6.4 4.6"><path d="M0.3 2.2 C1.6 0.3 4.6 0.3 5.9 2.2 C4.6 4.1 1.6 4.1 0.3 2.2 Z" fill="#d8d8d8"/><circle cx="3.1" cy="2.2" r="1" fill="#4a4a4a"/></svg>
<div style="left:715.80px;top:78.70px;width:7.60px;height:7.60px;background:#fbfbfb;"></div>
<svg style="left:715.80px;top:78.80px;" width="7.4" height="7.4" viewBox="0 0 7.4 7.4"><path d="M2.6 1.4V6.4M4.8 1.4V6.4" stroke="#bbb" stroke-width="0.5"/></svg>
<svg style="left:706.00px;top:80.90px;" width="5" height="4" viewBox="0 0 5 4"><path d="M0.5 0.8 L2.4 2.7 L4.3 0.8" fill="none" stroke="#e0e0e0" stroke-width="0.9"/></svg>
<div class="t" style="left:726.80px;top:79.58px;height:6.24px;line-height:6.24px;font-size:5.2px;color:#e0e0e0;transform:scaleX(0.873);">&lt;Gro...</div>
<svg style="left:759.60px;top:79.70px;" width="5.6" height="5.6" viewBox="0 0 5.6 5.6"><circle cx="2.8" cy="2.8" r="1.6" fill="none" stroke="#d0d0d0" stroke-width="0.55"/></svg>
<svg style="left:672.30px;top:90.00px;" width="6.4" height="4.6" viewBox="0 0 6.4 4.6"><path d="M0.3 2.2 C1.6 0.3 4.6 0.3 5.9 2.2 C4.6 4.1 1.6 4.1 0.3 2.2 Z" fill="#d8d8d8"/><circle cx="3.1" cy="2.2" r="1" fill="#4a4a4a"/></svg>
<div style="left:726.70px;top:88.40px;width:7.60px;height:7.60px;background:#fbfbfb;"></div>
<div class="t" style="left:737.60px;top:89.56px;height:6.48px;line-height:6.48px;font-size:5.4px;color:#e0e0e0;transform:scaleX(0.889);">...</div>
<svg style="left:759.60px;top:89.40px;" width="5.6" height="5.6" viewBox="0 0 5.6 5.6"><circle cx="2.8" cy="2.8" r="1.6" fill="#a8a8a8" stroke="#d0d0d0" stroke-width="0.55"/></svg>
<svg style="left:672.30px;top:99.80px;" width="6.4" height="4.6" viewBox="0 0 6.4 4.6"><path d="M0.3 2.2 C1.6 0.3 4.6 0.3 5.9 2.2 C4.6 4.1 1.6 4.1 0.3 2.2 Z" fill="#d8d8d8"/><circle cx="3.1" cy="2.2" r="1" fill="#4a4a4a"/></svg>
<div style="left:726.70px;top:98.20px;width:7.60px;height:7.60px;background:#fbfbfb;"></div>
<svg style="left:726.70px;top:98.30px;" width="7.4" height="7.4" viewBox="0 0 7.4 7.4"><path d="M2.6 1.4V6.4M4.8 1.4V6.4" stroke="#bbb" stroke-width="0.5"/></svg>
<div class="t" style="left:737.60px;top:99.36px;height:6.48px;line-height:6.48px;font-size:5.4px;color:#e0e0e0;transform:scaleX(0.889);">...</div>
<svg style="left:759.60px;top:99.20px;" width="5.6" height="5.6" viewBox="0 0 5.6 5.6"><circle cx="2.8" cy="2.8" r="1.6" fill="#a8a8a8" stroke="#d0d0d0" stroke-width="0.55"/></svg>
<svg style="left:672.30px;top:109.70px;" width="6.4" height="4.6" viewBox="0 0 6.4 4.6"><path d="M0.3 2.2 C1.6 0.3 4.6 0.3 5.9 2.2 C4.6 4.1 1.6 4.1 0.3 2.2 Z" fill="#d8d8d8"/><circle cx="3.1" cy="2.2" r="1" fill="#4a4a4a"/></svg>
<div style="left:715.80px;top:108.10px;width:7.60px;height:7.60px;background:#fbfbfb;"></div>
<svg style="left:715.80px;top:108.20px;" width="7.4" height="7.4" viewBox="0 0 7.4 7.4"><path d="M2.6 1.4V6.4M4.8 1.4V6.4" stroke="#bbb" stroke-width="0.5"/></svg>
<svg style="left:706.60px;top:109.50px;" width="4" height="5" viewBox="0 0 4 5"><path d="M0.9 0.6 L2.8 2.5 L0.9 4.4" fill="none" stroke="#e0e0e0" stroke-width="0.8"/></svg>
<div class="t" style="left:726.80px;top:108.98px;height:6.24px;line-height:6.24px;font-size:5.2px;color:#e0e0e0;transform:scaleX(0.873);">&lt;Gro...</div>
<svg style="left:759.60px;top:109.10px;" width="5.6" height="5.6" viewBox="0 0 5.6 5.6"><circle cx="2.8" cy="2.8" r="1.6" fill="none" stroke="#d0d0d0" stroke-width="0.55"/></svg>
<svg style="left:672.30px;top:119.40px;" width="6.4" height="4.6" viewBox="0 0 6.4 4.6"><path d="M0.3 2.2 C1.6 0.3 4.6 0.3 5.9 2.2 C4.6 4.1 1.6 4.1 0.3 2.2 Z" fill="#d8d8d8"/><circle cx="3.1" cy="2.2" r="1" fill="#4a4a4a"/></svg>
<div style="left:715.80px;top:117.80px;width:7.60px;height:7.60px;background:#fbfbfb;"></div>
<svg style="left:715.80px;top:117.90px;" width="7.4" height="7.4" viewBox="0 0 7.4 7.4"><path d="M2.6 1.4V6.4M4.8 1.4V6.4" stroke="#bbb" stroke-width="0.5"/></svg>
<svg style="left:706.60px;top:119.20px;" width="4" height="5" viewBox="0 0 4 5"><path d="M0.9 0.6 L2.8 2.5 L0.9 4.4" fill="none" stroke="#e0e0e0" stroke-width="0.8"/></svg>
<div class="t" style="left:726.80px;top:118.68px;height:6.24px;line-height:6.24px;font-size:5.2px;color:#e0e0e0;transform:scaleX(0.873);">&lt;Gro...</div>
<svg style="left:759.60px;top:118.80px;" width="5.6" height="5.6" viewBox="0 0 5.6 5.6"><circle cx="2.8" cy="2.8" r="1.6" fill="none" stroke="#d0d0d0" stroke-width="0.55"/></svg>
<svg style="left:672.30px;top:129.30px;" width="6.4" height="4.6" viewBox="0 0 6.4 4.6"><path d="M0.3 2.2 C1.6 0.3 4.6 0.3 5.9 2.2 C4.6 4.1 1.6 4.1 0.3 2.2 Z" fill="#d8d8d8"/><circle cx="3.1" cy="2.2" r="1" fill="#4a4a4a"/></svg>
<div style="left:715.80px;top:127.70px;width:7.60px;height:7.60px;background:#fbfbfb;"></div>
<svg style="left:715.80px;top:127.80px;" width="7.4" height="7.4" viewBox="0 0 7.4 7.4"><path d="M2.6 1.4V6.4M4.8 1.4V6.4" stroke="#bbb" stroke-width="0.5"/></svg>
<svg style="left:706.60px;top:129.10px;" width="4" height="5" viewBox="0 0 4 5"><path d="M0.9 0.6 L2.8 2.5 L0.9 4.4" fill="none" stroke="#e0e0e0" stroke-width="0.8"/></svg>
<div class="t" style="left:726.80px;top:128.58px;height:6.24px;line-height:6.24px;font-size:5.2px;color:#e0e0e0;transform:scaleX(0.873);">&lt;Gro...</div>
<svg style="left:759.60px;top:128.70px;" width="5.6" height="5.6" viewBox="0 0 5.6 5.6"><circle cx="2.8" cy="2.8" r="1.6" fill="none" stroke="#d0d0d0" stroke-width="0.55"/></svg>
<svg style="left:672.30px;top:139.00px;" width="6.4" height="4.6" viewBox="0 0 6.4 4.6"><path d="M0.3 2.2 C1.6 0.3 4.6 0.3 5.9 2.2 C4.6 4.1 1.6 4.1 0.3 2.2 Z" fill="#d8d8d8"/><circle cx="3.1" cy="2.2" r="1" fill="#4a4a4a"/></svg>
<div style="left:715.80px;top:137.40px;width:7.60px;height:7.60px;background:#fbfbfb;"></div>
<svg style="left:715.80px;top:137.50px;" width="7.4" height="7.4" viewBox="0 0 7.4 7.4"><path d="M2.6 1.4V6.4M4.8 1.4V6.4" stroke="#bbb" stroke-width="0.5"/></svg>
<svg style="left:706.60px;top:138.80px;" width="4" height="5" viewBox="0 0 4 5"><path d="M0.9 0.6 L2.8 2.5 L0.9 4.4" fill="none" stroke="#e0e0e0" stroke-width="0.8"/></svg>
<div class="t" style="left:726.80px;top:138.28px;height:6.24px;line-height:6.24px;font-size:5.2px;color:#e0e0e0;transform:scaleX(0.873);">&lt;Gro...</div>
<svg style="left:759.60px;top:138.40px;" width="5.6" height="5.6" viewBox="0 0 5.6 5.6"><circle cx="2.8" cy="2.8" r="1.6" fill="none" stroke="#d0d0d0" stroke-width="0.55"/></svg>
<svg style="left:672.30px;top:148.40px;" width="6.4" height="2.4" viewBox="0 0 6.4 2.4"><path d="M0.3 2.2 C1.6 0.3 4.6 0.3 5.9 2.2 C4.6 4.1 1.6 4.1 0.3 2.2 Z" fill="#d8d8d8"/><circle cx="3.1" cy="2.2" r="1" fill="#4a4a4a"/></svg>
<div style="left:715.80px;top:147.40px;width:7.40px;height:3.40px;background:#fbfbfb;"></div>
<div style="left:773.60px;top:67.40px;width:6.00px;height:83.40px;background:#4e4e4e;"></div>
<div style="left:774.40px;top:87.40px;width:4.60px;height:11.40px;background:#6a6a6a;border-radius:1px;"></div>
<svg style="left:774.40px;top:69.00px;" width="5" height="4" viewBox="0 0 5 4"><path d="M0.5 3 L2.4 1.1 L4.3 3" fill="none" stroke="#9a9a9a" stroke-width="0.7"/></svg>
<svg style="left:774.40px;top:144.60px;" width="5" height="4" viewBox="0 0 5 4"><path d="M0.5 1 L2.4 2.9 L4.3 1" fill="none" stroke="#9a9a9a" stroke-width="0.7"/></svg>
<div class="t" style="left:670.50px;top:152.48px;height:6.24px;line-height:6.24px;font-size:5.2px;color:#d0d0d0;transform:scaleX(0.865);">1 Layer</div>
<svg style="left:714.40px;top:152.40px;" width="6" height="7" viewBox="0 0 6 7"><circle cx="3.4" cy="2.6" r="1.7" fill="none" stroke="#6e6e6e" stroke-width="0.7"/><path d="M2.2 3.8L0.6 5.8" stroke="#6e6e6e" stroke-width="0.8"/></svg>
<svg style="left:727.40px;top:151.80px;" width="6" height="7" viewBox="0 0 6 7"><rect x="1.2" y="1.6" width="3.4" height="4.6" fill="#6a6a6a"/><circle cx="2.9" cy="1.4" r="0.9" fill="#6a6a6a"/></svg>
<svg style="left:739.40px;top:152.40px;" width="7" height="6" viewBox="0 0 7 6"><path d="M0.6 1V3.4H2.6" stroke="#6a6a6a" stroke-width="0.7" fill="none"/><rect x="3" y="1.6" width="3.4" height="3.6" fill="#6a6a6a"/></svg>
<svg style="left:751.60px;top:152.00px;" width="7" height="7" viewBox="0 0 7 7"><path d="M1.6 0.6H5.6V4.6H4.2V6H0.6V2H1.6Z" fill="#d4d4d4"/><path d="M0.6 2H4.2V6" stroke="#535353" stroke-width="0.4" fill="none"/></svg>
<svg style="left:764.00px;top:151.60px;" width="6" height="7" viewBox="0 0 6 7"><path d="M0.6 1.6H5.4M2.2 1.4V0.6H3.8V1.4" stroke="#d0d0d0" stroke-width="0.7" fill="none"/><path d="M1.1 2.2H4.9L4.6 6.6H1.4Z" fill="#d0d0d0"/></svg>
<div style="left:667.40px;top:161.60px;width:116.20px;height:107.40px;background:#535353;"></div>
<div style="left:667.40px;top:161.60px;width:116.20px;height:12.60px;background:#424242;"></div>
<div class="t" style="left:672.00px;top:164.74px;height:6.72px;line-height:6.72px;font-size:5.6px;color:#bdbdbd;transform:scaleX(0.834);">Stroke</div>
<div style="left:691.00px;top:161.60px;width:28.40px;height:12.60px;background:#535353;"></div>
<div class="t" style="left:695.00px;top:164.74px;height:6.72px;line-height:6.72px;font-size:5.6px;color:#f4f4f4;font-weight:bold;transform:scaleX(0.794);">Swatches</div>
<div class="t" style="left:724.00px;top:164.74px;height:6.72px;line-height:6.72px;font-size:5.6px;color:#bdbdbd;transform:scaleX(0.851);">Graphic Styles</div>
<svg style="left:775.00px;top:166.10px;" width="5" height="4" viewBox="0 0 5 4"><path d="M0 0.5H4.6M0 1.8H4.6M0 3.1H4.6" stroke="#a8a8a8" stroke-width="0.7"/></svg>
<div style="left:670.70px;top:176.90px;width:7.80px;height:7.80px;background:#fafafa;"></div>
<svg style="left:670.70px;top:176.90px;" width="7.8" height="7.8" viewBox="0 0 7.8 7.8"><path d="M0.4 7.4L7.4 0.4" stroke="#d02020" stroke-width="0.7"/></svg>
<div style="left:676.00px;top:182.40px;width:7.20px;height:7.20px;background:#000;border:0.5px solid #ddd;box-sizing:border-box;"></div>
<div style="left:678.20px;top:184.60px;width:2.80px;height:2.80px;background:#777;"></div>
<svg style="left:759.80px;top:179.00px;" width="6" height="6" viewBox="0 0 6 6"><path d="M0 0.6H6M0 2.4H6M0 4.2H6M0 5.8H6" stroke="#d8d8d8" stroke-width="0.7"/></svg>
<div style="left:769.50px;top:176.90px;width:10.80px;height:10.30px;background:#3a3a3a;border-radius:0.8px;"></div>
<svg style="left:771.60px;top:179.00px;" width="7" height="7" viewBox="0 0 7 7"><g fill="#e4e4e4"><rect x="0" y="0" width="1.7" height="1.5"/><rect x="2.3" y="0" width="1.7" height="1.5"/><rect x="4.6" y="0" width="1.7" height="1.5"/><rect x="0" y="2.1" width="1.7" height="1.5"/><rect x="2.3" y="2.1" width="1.7" height="1.5"/><rect x="4.6" y="2.1" width="1.7" height="1.5"/><rect x="0" y="4.2" width="1.7" height="1.5"/><rect x="2.3" y="4.2" width="1.7" height="1.5"/><rect x="4.6" y="4.2" width="1.7" height="1.5"/></g></svg>
<div style="left:670.70px;top:193.50px;width:5.80px;height:5.80px;background:#fff;"></div>
<div style="left:677.26px;top:193.50px;width:5.80px;height:5.80px;background:#e8e8e8;"></div>
<div style="left:683.82px;top:193.50px;width:5.80px;height:5.80px;background:#ffffff;"></div>
<div style="left:690.38px;top:193.50px;width:5.80px;height:5.80px;background:#000000;"></div>
<div style="left:696.94px;top:193.50px;width:5.80px;height:5.80px;background:#e8281c;"></div>
<div style="left:703.50px;top:193.50px;width:5.80px;height:5.80px;background:#f4ec28;"></div>
<div style="left:710.06px;top:193.50px;width:5.80px;height:5.80px;background:#5cc83c;"></div>
<div style="left:716.62px;top:193.50px;width:5.80px;height:5.80px;background:#34c8e8;"></div>
<div style="left:723.18px;top:193.50px;width:5.80px;height:5.80px;background:#2c38d8;"></div>
<div style="left:729.74px;top:193.50px;width:5.80px;height:5.80px;background:#d838d8;"></div>
<div style="left:736.30px;top:193.50px;width:5.80px;height:5.80px;background:#c43030;"></div>
<div style="left:742.86px;top:193.50px;width:5.80px;height:5.80px;background:#e04828;"></div>
<div style="left:749.42px;top:193.50px;width:5.80px;height:5.80px;background:#e87c28;"></div>
<div style="left:755.98px;top:193.50px;width:5.80px;height:5.80px;background:#f0a428;"></div>
<div style="left:762.54px;top:193.50px;width:5.80px;height:5.80px;background:#f4bc28;"></div>
<div style="left:670.70px;top:200.10px;width:5.80px;height:5.80px;background:#f4e828;"></div>
<div style="left:677.26px;top:200.10px;width:5.80px;height:5.80px;background:#b8d030;"></div>
<div style="left:683.82px;top:200.10px;width:5.80px;height:5.80px;background:#84bc3c;"></div>
<div style="left:690.38px;top:200.10px;width:5.80px;height:5.80px;background:#4ca848;"></div>
<div style="left:696.94px;top:200.10px;width:5.80px;height:5.80px;background:#38984c;"></div>
<div style="left:703.50px;top:200.10px;width:5.80px;height:5.80px;background:#347c44;"></div>
<div style="left:710.06px;top:200.10px;width:5.80px;height:5.80px;background:#44a08c;"></div>
<div style="left:716.62px;top:200.10px;width:5.80px;height:5.80px;background:#44a8c8;"></div>
<div style="left:723.18px;top:200.10px;width:5.80px;height:5.80px;background:#3c84c8;"></div>
<div style="left:729.74px;top:200.10px;width:5.80px;height:5.80px;background:#3458b0;"></div>
<div style="left:736.30px;top:200.10px;width:5.80px;height:5.80px;background:#2c2c88;"></div>
<div style="left:742.86px;top:200.10px;width:5.80px;height:5.80px;background:#5c3498;"></div>
<div style="left:749.42px;top:200.10px;width:5.80px;height:5.80px;background:#8c3498;"></div>
<div style="left:755.98px;top:200.10px;width:5.80px;height:5.80px;background:#b42c8c;"></div>
<div style="left:762.54px;top:200.10px;width:5.80px;height:5.80px;background:#c4286c;"></div>
<div style="left:670.70px;top:206.70px;width:5.80px;height:5.80px;background:#c4285c;"></div>
<div style="left:677.26px;top:206.70px;width:5.80px;height:5.80px;background:#dc3098;"></div>
<div style="left:683.82px;top:206.70px;width:5.80px;height:5.80px;background:#c8b49c;"></div>
<div style="left:690.38px;top:206.70px;width:5.80px;height:5.80px;background:#a08c78;"></div>
<div style="left:696.94px;top:206.70px;width:5.80px;height:5.80px;background:#78685c;"></div>
<div style="left:703.50px;top:206.70px;width:5.80px;height:5.80px;background:#5c5048;"></div>
<div style="left:710.06px;top:206.70px;width:5.80px;height:5.80px;background:#c8a870;"></div>
<div style="left:716.62px;top:206.70px;width:5.80px;height:5.80px;background:#a87c48;"></div>
<div style="left:723.18px;top:206.70px;width:5.80px;height:5.80px;background:#946434;"></div>
<div style="left:729.74px;top:206.70px;width:5.80px;height:5.80px;background:#7c5028;"></div>
<div style="left:736.30px;top:206.70px;width:5.80px;height:5.80px;background:#5c3c20;"></div>
<div style="left:742.86px;top:206.70px;width:5.80px;height:5.80px;background:#44301c;"></div>
<div style="left:749.42px;top:206.70px;width:5.80px;height:5.80px;background:linear-gradient(90deg,#fff,#222);"></div>
<div style="left:755.98px;top:206.70px;width:5.80px;height:5.80px;background:linear-gradient(90deg,#f8f8ff,#2878e0);"></div>
<div style="left:762.54px;top:206.70px;width:5.80px;height:5.80px;background:linear-gradient(90deg,#f8c0d0,#e04888);"></div>
<div style="left:670.70px;top:213.30px;width:5.80px;height:5.80px;background:#e89428;"></div>
<div style="left:677.26px;top:213.30px;width:5.80px;height:5.80px;background:#dcdcd0;"></div>
<div style="left:683.82px;top:213.30px;width:5.80px;height:5.80px;background:#a4c0dc;"></div>
<div style="left:690.38px;top:213.30px;width:5.80px;height:5.80px;background:#c4d8c0;"></div>
<svg style="left:670.70px;top:193.50px;" width="5.8" height="5.8" viewBox="0 0 5.8 5.8"><path d="M0.3 5.5L5.5 0.3" stroke="#d02020" stroke-width="0.7"/></svg>
<svg style="left:677.26px;top:193.50px;" width="5.8" height="5.8" viewBox="0 0 5.8 5.8"><circle cx="2.9" cy="2.9" r="1.5" fill="none" stroke="#555" stroke-width="0.5"/><path d="M2.9 0.4V5.4M0.4 2.9H5.4" stroke="#555" stroke-width="0.5"/></svg>
<svg style="left:670.70px;top:221.60px;" width="6" height="6" viewBox="0 0 6 6"><path d="M0.3 1H2.2L2.8 1.8H5.4V4.8H0.3Z" fill="#c8c8c8"/></svg>
<div style="left:677.26px;top:221.20px;width:5.80px;height:5.80px;background:#000;"></div>
<div style="left:683.82px;top:221.20px;width:5.80px;height:5.80px;background:#1c1c1c;"></div>
<div style="left:690.38px;top:221.20px;width:5.80px;height:5.80px;background:#303030;"></div>
<div style="left:696.94px;top:221.20px;width:5.80px;height:5.80px;background:#484848;"></div>
<div style="left:703.50px;top:221.20px;width:5.80px;height:5.80px;background:#606060;"></div>
<div style="left:710.06px;top:221.20px;width:5.80px;height:5.80px;background:#7c7c7c;"></div>
<div style="left:716.62px;top:221.20px;width:5.80px;height:5.80px;background:#949494;"></div>
<div style="left:723.18px;top:221.20px;width:5.80px;height:5.80px;background:#acacac;"></div>
<div style="left:729.74px;top:221.20px;width:5.80px;height:5.80px;background:#c4c4c4;"></div>
<div style="left:736.30px;top:221.20px;width:5.80px;height:5.80px;background:#dcdcdc;"></div>
<div style="left:742.86px;top:221.20px;width:5.80px;height:5.80px;background:#f4f4f4;"></div>
<svg style="left:670.70px;top:229.00px;" width="6" height="6" viewBox="0 0 6 6"><path d="M0.3 1H2.2L2.8 1.8H5.4V4.8H0.3Z" fill="#c8c8c8"/></svg>
<div style="left:677.26px;top:228.60px;width:5.80px;height:5.80px;background:#4c9ce8;"></div>
<div style="left:683.82px;top:228.60px;width:5.80px;height:5.80px;background:#84c43c;"></div>
<div style="left:690.38px;top:228.60px;width:5.80px;height:5.80px;background:#f09428;"></div>
<div style="left:696.94px;top:228.60px;width:5.80px;height:5.80px;background:#e83428;"></div>
<div style="left:703.50px;top:228.60px;width:5.80px;height:5.80px;background:#f088b0;"></div>
<div style="left:710.06px;top:228.60px;width:5.80px;height:5.80px;background:#d0d4d8;"></div>
<svg style="left:672.60px;top:261.40px;" width="8" height="7" viewBox="0 0 8 7"><path d="M0.8 0.8V6M2.6 0.8V6M4.2 1.2L5.6 6" stroke="#bcbcbc" stroke-width="1" fill="none"/><rect x="6.6" y="5.2" width="0.9" height="0.9" fill="#bcbcbc"/></svg>
<svg style="left:685.40px;top:261.60px;" width="6" height="7" viewBox="0 0 6 7"><path d="M4.8 0.8L1.4 3.2L4.8 5.8" stroke="#bcbcbc" stroke-width="0.8" fill="none"/><circle cx="4.8" cy="0.9" r="0.8" fill="#bcbcbc"/><circle cx="1.3" cy="3.2" r="0.8" fill="#bcbcbc"/><circle cx="4.8" cy="5.7" r="0.8" fill="#bcbcbc"/></svg>
<svg style="left:696.00px;top:261.40px;" width="10" height="7" viewBox="0 0 10 7"><path d="M2.2 6.2A1.8 1.8 0 0 1 2.2 2.8A2.6 2.6 0 0 1 7 2.4A2 2 0 0 1 7.4 6.2Z" fill="#bcbcbc"/></svg>
<svg style="left:714.80px;top:261.40px;" width="8" height="7" viewBox="0 0 8 7"><rect x="0.4" y="0.6" width="5.4" height="5.4" fill="#bcbcbc"/><path d="M1.4 3.3H4.8M3.1 1.6V5" stroke="#666" stroke-width="0.6"/><rect x="6.6" y="5.2" width="0.9" height="0.9" fill="#bcbcbc"/></svg>
<svg style="left:727.80px;top:261.20px;" width="7" height="7" viewBox="0 0 7 7"><rect x="0.6" y="0.8" width="5.4" height="5.4" fill="none" stroke="#bcbcbc" stroke-width="0.8"/><rect x="0.6" y="0.8" width="5.4" height="1.6" fill="#bcbcbc"/><rect x="2" y="3.4" width="2.6" height="1.8" fill="#bcbcbc"/></svg>
<svg style="left:739.00px;top:261.60px;" width="8" height="7" viewBox="0 0 8 7"><path d="M0.4 0.8H2.8L3.6 1.8H7V6H0.4Z" fill="#bcbcbc"/></svg>
<svg style="left:752.00px;top:261.20px;" width="7" height="7" viewBox="0 0 7 7"><path d="M1.6 0.6H5.6V4.6H4.2V6H0.6V2H1.6Z" fill="#bcbcbc"/><path d="M0.6 2H4.2V6" stroke="#535353" stroke-width="0.4" fill="none"/></svg>
<svg style="left:764.00px;top:261.00px;" width="6" height="7" viewBox="0 0 6 7"><path d="M0.6 1.6H5.4M2.2 1.4V0.6H3.8V1.4" stroke="#7a7a7a" stroke-width="0.7" fill="none"/><path d="M1.1 2.2H4.9L4.6 6.6H1.4Z" fill="#7a7a7a"/></svg>
<div style="left:667.40px;top:270.00px;width:116.20px;height:108.60px;background:#535353;"></div>
<div style="left:667.40px;top:270.00px;width:116.20px;height:12.60px;background:#424242;"></div>
<div style="left:667.40px;top:270.00px;width:23.20px;height:12.60px;background:#535353;"></div>
<div class="t" style="left:674.80px;top:273.14px;height:6.72px;line-height:6.72px;font-size:5.6px;color:#f4f4f4;font-weight:bold;transform:scaleX(0.766);">Color</div>
<div class="t" style="left:695.00px;top:273.14px;height:6.72px;line-height:6.72px;font-size:5.6px;color:#bdbdbd;transform:scaleX(0.852);">Transparency</div>
<div class="t" style="left:732.00px;top:273.14px;height:6.72px;line-height:6.72px;font-size:5.6px;color:#bdbdbd;transform:scaleX(0.908);">Gradient</div>
<svg style="left:775.00px;top:274.50px;" width="5" height="4" viewBox="0 0 5 4"><path d="M0 0.5H4.6M0 1.8H4.6M0 3.1H4.6" stroke="#a8a8a8" stroke-width="0.7"/></svg>
<svg style="left:669.60px;top:274.80px;" width="2" height="4" viewBox="0 0 2 4"><path d="M0.2 0.8H1.6M0.2 2.8H1.6" stroke="#cfcfcf" stroke-width="0.7"/></svg>
<div style="left:670.70px;top:287.00px;width:5.60px;height:6.60px;background:#fafafa;"></div>
<svg style="left:670.70px;top:287.00px;" width="5.6" height="6.6" viewBox="0 0 5.6 6.6"><path d="M0.3 6.3L5.3 0.3" stroke="#d02020" stroke-width="0.8"/></svg>
<div style="left:676.80px;top:287.00px;width:6.00px;height:6.60px;background:#000;"></div>
<div style="left:683.40px;top:287.00px;width:5.90px;height:6.60px;background:#fff;"></div>
<div class="t" style="left:742.60px;top:287.88px;height:6.24px;line-height:6.24px;font-size:5.2px;color:#d0d0d0;transform:scaleX(1.000);">#</div>
<div style="left:748.00px;top:286.90px;width:26.30px;height:8.00px;background:#454545;"></div>
<div class="t" style="left:750.00px;top:287.88px;height:6.24px;line-height:6.24px;font-size:5.2px;color:#e0e0e0;transform:scaleX(0.807);">808080</div>
<div style="left:671.20px;top:298.80px;width:103.10px;height:76.00px;background:linear-gradient(90deg,#ee1c1c 0%,#f26a1c 8%,#fbf22a 17%,#86e226 29%,#3edc6a 40%,#46e4f2 50%,#3a78f0 59%,#2222e6 67%,#e236ea 83%,#ee2648 96%,#ee1c24 100%);"></div>
<div style="left:671.20px;top:298.80px;width:103.10px;height:76.00px;background:linear-gradient(180deg,#ffffff 0%,rgba(255,255,255,.86) 10%,rgba(255,255,255,.46) 28%,rgba(255,255,255,.08) 48%,rgba(0,0,0,0) 50%,rgba(0,0,0,.26) 66%,rgba(0,0,0,.62) 84%,rgba(0,0,0,.96) 100%);"></div>
<div style="left:667.40px;top:379.60px;width:116.20px;height:52.40px;background:#535353;"></div>
<div style="left:667.40px;top:379.60px;width:116.20px;height:12.80px;background:#424242;"></div>
<div style="left:667.40px;top:379.60px;width:33.60px;height:12.80px;background:#535353;"></div>
<div class="t" style="left:675.00px;top:382.84px;height:6.72px;line-height:6.72px;font-size:5.6px;color:#f4f4f4;font-weight:bold;transform:scaleX(0.825);">Transform</div>
<svg style="left:775.00px;top:384.20px;" width="5" height="4" viewBox="0 0 5 4"><path d="M0 0.5H4.6M0 1.8H4.6M0 3.1H4.6" stroke="#a8a8a8" stroke-width="0.7"/></svg>
<svg style="left:669.60px;top:384.40px;" width="2" height="4" viewBox="0 0 2 4"><path d="M0.2 0.8H1.6M0.2 2.8H1.6" stroke="#cfcfcf" stroke-width="0.7"/></svg>
<svg style="left:670.00px;top:401.00px;" width="9.6" height="9.8" viewBox="0 0 9.6 9.8"><rect x="0.8" y="0.8" width="8" height="8.2" fill="none" stroke="#c8c8c8" stroke-width="0.6" stroke-dasharray="1.4 1"/><g fill="#e8e8e8"><rect x="0" y="0" width="1.8" height="1.8"/><rect x="3.9" y="0" width="1.8" height="1.8"/><rect x="7.8" y="0" width="1.8" height="1.8"/><rect x="0" y="4" width="1.8" height="1.8"/><rect x="7.8" y="4" width="1.8" height="1.8"/><rect x="0" y="8" width="1.8" height="1.8"/><rect x="3.9" y="8" width="1.8" height="1.8"/><rect x="7.8" y="8" width="1.8" height="1.8"/></g><rect x="3.4" y="3.5" width="2.8" height="2.8" fill="#fff"/></svg>
<div style="left:691.50px;top:397.00px;width:27.50px;height:8.20px;background:#585858;"></div>
<div class="t" style="left:686.50px;top:398.20px;height:6.00px;line-height:6.00px;font-size:5px;color:#6e6e6e;transform:scaleX(1.000);">X:</div>
<div class="t" style="left:693.50px;top:398.20px;height:6.00px;line-height:6.00px;font-size:5px;color:#686868;transform:scaleX(1.000);">0 in</div>
<div style="left:729.00px;top:397.00px;width:27.80px;height:8.20px;background:#585858;"></div>
<div class="t" style="left:723.00px;top:398.20px;height:6.00px;line-height:6.00px;font-size:5px;color:#6e6e6e;transform:scaleX(1.000);">W:</div>
<div class="t" style="left:731.00px;top:398.20px;height:6.00px;line-height:6.00px;font-size:5px;color:#686868;transform:scaleX(1.000);">0 in</div>
<div style="left:691.50px;top:408.20px;width:27.50px;height:8.20px;background:#585858;"></div>
<div class="t" style="left:686.50px;top:409.40px;height:6.00px;line-height:6.00px;font-size:5px;color:#6e6e6e;transform:scaleX(1.000);">Y:</div>
<div class="t" style="left:693.50px;top:409.40px;height:6.00px;line-height:6.00px;font-size:5px;color:#686868;transform:scaleX(1.000);">0 in</div>
<div style="left:729.00px;top:408.20px;width:27.80px;height:8.20px;background:#585858;"></div>
<div class="t" style="left:723.60px;top:409.40px;height:6.00px;line-height:6.00px;font-size:5px;color:#6e6e6e;transform:scaleX(1.000);">H:</div>
<div class="t" style="left:731.00px;top:409.40px;height:6.00px;line-height:6.00px;font-size:5px;color:#686868;transform:scaleX(1.000);">0 in</div>
<div style="left:691.50px;top:420.00px;width:25.20px;height:8.20px;background:#585858;"></div>
<div style="left:729.00px;top:420.00px;width:27.40px;height:8.20px;background:#585858;"></div>
<div class="t" style="left:693.50px;top:421.20px;height:6.00px;line-height:6.00px;font-size:5px;color:#686868;transform:scaleX(1.000);">0°</div>
<div class="t" style="left:731.00px;top:421.20px;height:6.00px;line-height:6.00px;font-size:5px;color:#686868;transform:scaleX(1.000);">0°</div>
<svg style="left:683.50px;top:421.60px;" width="6" height="5" viewBox="0 0 6 5"><path d="M0.4 4.6H5.2L0.4 0.8Z" fill="none" stroke="#777" stroke-width="0.6"/></svg>
<svg style="left:722.00px;top:421.40px;" width="6" height="6" viewBox="0 0 6 6"><path d="M0.6 5.2L2.6 0.8H5.4L3.4 5.2Z" fill="#8a8a8a"/></svg>
<svg style="left:710.60px;top:422.60px;" width="5" height="4" viewBox="0 0 5 4"><path d="M0.5 0.8 L2.4 2.7 L4.3 0.8" fill="none" stroke="#777" stroke-width="0.9"/></svg>
<svg style="left:749.60px;top:422.60px;" width="5" height="4" viewBox="0 0 5 4"><path d="M0.5 0.8 L2.4 2.7 L4.3 0.8" fill="none" stroke="#777" stroke-width="0.9"/></svg>
<svg style="left:760.60px;top:400.40px;" width="7" height="11" viewBox="0 0 7 11"><path d="M2 1.2A1.4 1.4 0 0 1 4.8 1.2V3.6A1.4 1.4 0 0 1 2 3.6ZM3 6.4A1.4 1.4 0 0 1 5.8 6.4V8.8A1.4 1.4 0 0 1 3 8.8Z" fill="none" stroke="#cfcfcf" stroke-width="0.8"/><path d="M0.6 0.6L6.4 10" stroke="#cfcfcf" stroke-width="0.7"/></svg>
<div style="left:667.40px;top:432.60px;width:116.20px;height:14.20px;background:#535353;"></div>
<div style="left:667.40px;top:432.60px;width:116.20px;height:14.20px;background:#424242;"></div>
<div style="left:667.40px;top:432.60px;width:31.60px;height:14.20px;background:#535353;"></div>
<div class="t" style="left:675.00px;top:436.54px;height:6.72px;line-height:6.72px;font-size:5.6px;color:#f4f4f4;font-weight:bold;transform:scaleX(0.822);">Character</div>
<div class="t" style="left:703.50px;top:436.54px;height:6.72px;line-height:6.72px;font-size:5.6px;color:#bdbdbd;transform:scaleX(0.860);">Paragraph</div>
<div class="t" style="left:734.00px;top:436.54px;height:6.72px;line-height:6.72px;font-size:5.6px;color:#bdbdbd;transform:scaleX(0.851);">OpenType</div>
<svg style="left:775.00px;top:437.90px;" width="5" height="4" viewBox="0 0 5 4"><path d="M0 0.5H4.6M0 1.8H4.6M0 3.1H4.6" stroke="#a8a8a8" stroke-width="0.7"/></svg>
<svg style="left:669.60px;top:438.00px;" width="2" height="4" viewBox="0 0 2 4"><path d="M0.2 0.8H1.6M0.2 2.8H1.6" stroke="#cfcfcf" stroke-width="0.7"/></svg>
<div style="left:0.00px;top:447.60px;width:762.00px;height:19.60px;background:linear-gradient(90deg,#e6ebf4 0%,#e8edf6 45%,#f3f6fb 62%,#ecf0f8 80%,#e8edf7 95%);"></div>
<div style="left:762.00px;top:447.60px;width:3.40px;height:22.00px;background:#3f78dc;"></div>
<div style="left:696.00px;top:467.00px;width:69.00px;height:3.00px;background:#2f66d0;"></div>
<div style="left:0.00px;top:447.60px;width:784.00px;height:2.20px;background:linear-gradient(180deg,rgba(0,0,0,.45),rgba(0,0,0,0));"></div>
<div style="left:0.00px;top:447.60px;width:3.60px;height:34.00px;background:#2a58c8;"></div>
<div style="left:3.60px;top:448.40px;width:150.60px;height:6.00px;background:#f4f4f4;"></div>
<div class="t" style="left:4.40px;top:448.60px;height:6.00px;line-height:6.00px;font-size:5px;color:#303030;transform:scaleX(0.985);">Right</div>
<div style="left:3.60px;top:454.20px;width:150.60px;height:15.00px;background:linear-gradient(180deg,#24449c,#1a3384);"></div>
<div style="left:133.00px;top:454.40px;width:21.00px;height:14.60px;background:linear-gradient(180deg,#5874b8,#3450a0);border-radius:1px;"></div>
<div style="left:154.20px;top:447.60px;width:32.00px;height:19.60px;background:#f6f8fc;"></div>
<div style="left:155.40px;top:447.60px;width:1.40px;height:19.60px;background:#c8d4e8;"></div>
<div style="left:158.00px;top:448.60px;width:20.80px;height:17.00px;background:#1e3450;"></div>
<div style="left:178.80px;top:447.60px;width:7.40px;height:19.60px;background:#ffffff;"></div>
<div style="left:727.00px;top:447.60px;width:6.00px;height:19.60px;background:#ffffff;"></div>
<div style="left:733.00px;top:447.60px;width:21.00px;height:18.00px;background:#1e3450;"></div>
<div style="left:754.00px;top:447.60px;width:8.00px;height:19.60px;background:#fdfdfd;"></div>
<svg style="left:756.00px;top:459.60px;" width="5" height="4" viewBox="0 0 5 4"><path d="M0.6 0.8H4.2L2.4 3Z" fill="#333"/></svg>
<div style="left:186.00px;top:467.00px;width:510.00px;height:3.00px;background:linear-gradient(180deg,#8fa6d8,#2a4aa4 50%,#6c86c8);"></div>
<div style="left:3.60px;top:469.20px;width:692.40px;height:9.60px;background:linear-gradient(180deg,#f4f4f4,#ececec);"></div>
<div class="t" style="left:5.00px;top:471.74px;height:6.72px;line-height:6.72px;font-size:5.6px;color:#202020;transform:scaleX(0.942);">2560 x 1600 x 24 BPP</div>
<div class="t" style="left:62.50px;top:471.74px;height:6.72px;line-height:6.72px;font-size:5.6px;color:#202020;transform:scaleX(1.018);">Not a file</div>
<div class="t" style="left:90.00px;top:471.74px;height:6.72px;line-height:6.72px;font-size:5.6px;color:#202020;transform:scaleX(0.940);">86 %</div>
<div class="t" style="left:107.50px;top:471.74px;height:6.72px;line-height:6.72px;font-size:5.6px;color:#202020;transform:scaleX(1.014);">Not a file / 11.72 MB</div>
<div class="t" style="left:164.00px;top:471.74px;height:6.72px;line-height:6.72px;font-size:5.6px;color:#202020;transform:scaleX(0.996);">Not a file</div>
<div style="left:0.00px;top:478.80px;width:699.00px;height:2.80px;background:#2c5cd0;"></div>
<div style="left:696.00px;top:469.40px;width:3.40px;height:12.00px;background:#2c5cd0;"></div>
<div style="left:410.60px;top:452.00px;width:30.40px;height:9.60px;background:linear-gradient(180deg,#f8f8f8,#e4e4e4);border:0.5px solid #8c8c8c;box-sizing:border-box;border-radius:0.8px;"></div>
<div class="t" style="left:412.80px;top:453.54px;height:6.72px;line-height:6.72px;font-size:5.6px;color:#7a7a7a;transform:scaleX(1.019);">Save draft</div>
<div style="left:444.00px;top:452.00px;width:28.00px;height:9.60px;background:linear-gradient(180deg,#f8f8f8,#e4e4e4);border:0.5px solid #8c8c8c;box-sizing:border-box;border-radius:0.8px;"></div>
<div class="t" style="left:446.20px;top:453.54px;height:6.72px;line-height:6.72px;font-size:5.6px;color:#101010;font-weight:bold;transform:scaleX(1.115);">Preview</div>
<div style="left:475.00px;top:452.00px;width:25.00px;height:9.60px;background:linear-gradient(180deg,#f8f8f8,#e4e4e4);border:0.5px solid #8c8c8c;box-sizing:border-box;border-radius:0.8px;"></div>
<div class="t" style="left:477.20px;top:453.54px;height:6.72px;line-height:6.72px;font-size:5.6px;color:#101010;font-weight:bold;transform:scaleX(1.086);">Submit</div>
<div style="left:0.00px;top:481.60px;width:800.00px;height:18.40px;background:linear-gradient(180deg,#2a4ea8 0%,#1d3c90 12%,#1a3586 100%);"></div>
<div style="left:0.00px;top:481.60px;width:800.00px;height:0.60px;background:#5f84d8;"></div>
<svg style="left:2.00px;top:2.00px;" width="10.00" height="10.00" viewBox="0 0 20 20"><g fill="#c41c1c"><circle cx="10" cy="10" r="5"/><circle cx="5" cy="5" r="2.8"/><circle cx="15.4" cy="6" r="2.6"/><circle cx="4.8" cy="14.6" r="2.6"/><circle cx="14.8" cy="15" r="2.8"/><circle cx="16.8" cy="10.6" r="1.8"/><circle cx="9.4" cy="3.4" r="1.8"/></g><circle cx="8.4" cy="9" r="1.3" fill="#fff"/><circle cx="12" cy="9" r="1.3" fill="#fff"/><circle cx="10.6" cy="12.6" r="1.2" fill="#f8d838"/></svg>
<div style="left:147.00px;top:482.40px;width:23.00px;height:18.00px;background:linear-gradient(180deg,rgba(150,175,230,.55),rgba(90,120,200,.45));border:0.5px solid rgba(190,210,250,.6);box-sizing:border-box;border-radius:1.2px;"></div>
<div style="left:222.00px;top:482.40px;width:23.00px;height:18.00px;background:linear-gradient(180deg,rgba(150,175,230,.55),rgba(90,120,200,.45));border:0.5px solid rgba(190,210,250,.6);box-sizing:border-box;border-radius:1.2px;"></div>
<div style="left:368.50px;top:482.40px;width:23.50px;height:18.00px;background:linear-gradient(180deg,rgba(150,175,230,.55),rgba(90,120,200,.45));border:0.5px solid rgba(190,210,250,.6);box-sizing:border-box;border-radius:1.2px;"></div>
<svg style="left:4.50px;top:482.20px;" width="18.00" height="18.00" viewBox="0 0 20 20"><defs><radialGradient id="og626" cx="50%" cy="35%" r="65%"><stop offset="0" stop-color="#8fd0f8"/><stop offset="0.55" stop-color="#2c78c8"/><stop offset="1" stop-color="#143c78"/></radialGradient></defs><circle cx="10" cy="10" r="9.4" fill="url(#og626)" stroke="#0c2858" stroke-width="0.6"/><path d="M5.2 6.6Q7.4 5.4 9.4 6.4L8.8 9.8Q6.8 8.8 4.6 10Z" fill="#e85c28"/><path d="M10.4 6.6Q12.6 7.6 14.8 6.4L14.2 9.8Q12 11 9.8 10Z" fill="#7cc83c"/><path d="M4.4 11Q6.6 9.8 8.6 10.8L8 14.2Q6 13.2 3.8 14.4Z" fill="#3c9ce8"/><path d="M9.6 11Q11.8 12 14 10.8L13.4 14.2Q11.2 15.4 9 14.4Z" fill="#f4c828"/></svg>
<svg style="left:29.00px;top:483.20px;" width="16.00" height="16.00" viewBox="0 0 20 20"><text x="10.4" y="18" font-family="Liberation Sans,sans-serif" font-weight="bold" font-size="29" text-anchor="middle" fill="#3cb4f0">e</text><ellipse cx="10" cy="10" rx="9.4" ry="3.6" transform="rotate(-32 10 10)" fill="none" stroke="#f4c838" stroke-width="1.4"/></svg>
<svg style="left:53.40px;top:483.20px;" width="16.00" height="16.00" viewBox="0 0 20 20"><path d="M2 4.4H8L9.4 3H16.6V6H2Z" fill="#e8d070"/><rect x="1.6" y="5.2" width="16.8" height="11.6" rx="0.8" fill="#f4e088"/><rect x="1.6" y="12" width="16.8" height="4.8" fill="#8cc0dc"/><rect x="3.4" y="4" width="12" height="3.4" fill="#fafaf4"/></svg>
<svg style="left:77.80px;top:483.20px;" width="16.00" height="16.00" viewBox="0 0 20 20"><rect x="3" y="2.6" width="14" height="14.8" rx="1.4" fill="#9cc4e4"/><rect x="4.6" y="3.6" width="11" height="12.8" rx="1" fill="#e87830"/><circle cx="10" cy="10" r="4.4" fill="#f4a050"/><path d="M8.4 7.2L13 10L8.4 12.8Z" fill="#fff"/></svg>
<svg style="left:102.20px;top:483.20px;" width="16.00" height="16.00" viewBox="0 0 20 20"><rect x="9.8" y="5" width="8.6" height="9.6" fill="#fff" stroke="#1874c8" stroke-width="0.8"/><path d="M10.2 5.6L14 9.6L18 5.4" fill="none" stroke="#1874c8" stroke-width="1.2"/><path d="M1.6 3.6L11.4 2V18L1.6 16.4Z" fill="#1470c4"/><text x="6.4" y="13.4" font-family="Liberation Sans,sans-serif" font-weight="bold" font-size="9.6" text-anchor="middle" fill="#fff">O</text></svg>
<svg style="left:126.60px;top:483.20px;" width="16.00" height="16.00" viewBox="0 0 20 20"><rect x="9.4" y="4" width="8.6" height="12" fill="#fff" stroke="#1c7c40" stroke-width="1"/><path d="M11.6 6.6H16.4M11.6 9H16.4M11.6 11.4H16.4M11.6 13.6H16.4" stroke="#1c7c40" stroke-width="0.9"/><path d="M1.6 3.6L11.4 2V18L1.6 16.4Z" fill="#1c7c40"/><text x="6.4" y="13.4" font-family="Liberation Sans,sans-serif" font-weight="bold" font-size="9.4" text-anchor="middle" fill="#fff">X</text></svg>
<svg style="left:151.00px;top:483.20px;" width="16.00" height="16.00" viewBox="0 0 20 20"><rect x="9.4" y="4" width="8.6" height="12" fill="#fff" stroke="#2858a8" stroke-width="1"/><path d="M11.6 6.6H16.4M11.6 9H16.4M11.6 11.4H16.4M11.6 13.6H16.4" stroke="#2858a8" stroke-width="0.9"/><path d="M1.6 3.6L11.4 2V18L1.6 16.4Z" fill="#2858a8"/><text x="6.4" y="13.4" font-family="Liberation Sans,sans-serif" font-weight="bold" font-size="9.4" text-anchor="middle" fill="#fff">W</text></svg>
<svg style="left:175.40px;top:483.20px;" width="16.00" height="16.00" viewBox="0 0 20 20"><rect x="9.4" y="4" width="8.6" height="12" fill="#fff" stroke="#2c8044" stroke-width="1"/><path d="M11.6 6.6H16.4M11.6 9H16.4M11.6 11.4H16.4M11.6 13.6H16.4" stroke="#2c8044" stroke-width="0.9"/><path d="M1.6 3.6L11.4 2V18L1.6 16.4Z" fill="#2c8044"/><text x="6.4" y="13.4" font-family="Liberation Sans,sans-serif" font-weight="bold" font-size="9.4" text-anchor="middle" fill="#fff">P</text></svg>
<svg style="left:199.80px;top:483.20px;" width="16.00" height="16.00" viewBox="0 0 20 20"><rect x="9.4" y="4" width="8.6" height="12" fill="#fff" stroke="#a8242c" stroke-width="1"/><path d="M11.6 6.6H16.4M11.6 9H16.4M11.6 11.4H16.4M11.6 13.6H16.4" stroke="#a8242c" stroke-width="0.9"/><path d="M1.6 3.6L11.4 2V18L1.6 16.4Z" fill="#a8242c"/><text x="6.4" y="13.4" font-family="Liberation Sans,sans-serif" font-weight="bold" font-size="9.4" text-anchor="middle" fill="#fff">A</text></svg>
<svg style="left:224.20px;top:483.20px;" width="16.00" height="16.00" viewBox="0 0 20 20"><circle cx="10" cy="10" r="8.4" fill="#e8483c"/><path d="M10 10L2.8 5.8A8.4 8.4 0 0 0 6.2 17.5Z" fill="#48a84c"/><path d="M10 10L6.2 17.5A8.4 8.4 0 0 0 18.4 10Z" fill="#f4c838"/><path d="M10 10H18.4A8.4 8.4 0 0 0 17.2 5.8H10Z" fill="#e8483c"/><circle cx="10" cy="10" r="4" fill="#fff"/><circle cx="10" cy="10" r="3.1" fill="#4888e8"/></svg>
<svg style="left:248.60px;top:483.20px;" width="16.00" height="16.00" viewBox="0 0 20 20"><circle cx="10" cy="10" r="8.6" fill="#fff"/><circle cx="10" cy="10" r="7.6" fill="#e860c0"/><circle cx="10" cy="10" r="6.4" fill="#fff"/><text x="10" y="14" font-family="DejaVu Sans,sans-serif" font-size="11" text-anchor="middle" fill="#d848b8">♫</text></svg>
<svg style="left:273.00px;top:483.20px;" width="16.00" height="16.00" viewBox="0 0 20 20"><rect x="2.4" y="2.4" width="15.2" height="15.2" rx="2" fill="#d8183c"/><text x="10" y="15" font-family="Liberation Sans,sans-serif" font-weight="bold" font-style="italic" font-size="14" text-anchor="middle" fill="#fff">Q</text></svg>
<svg style="left:297.40px;top:483.20px;" width="16.00" height="16.00" viewBox="0 0 20 20"><rect x="2" y="3" width="16" height="14" fill="#2c3c98"/><path d="M4 14L10 7L16 14" fill="none" stroke="#f08428" stroke-width="2.2"/><path d="M4 15.4L10 8.6L16 15.4" fill="none" stroke="#e83828" stroke-width="1"/></svg>
<svg style="left:321.80px;top:483.20px;" width="16.00" height="16.00" viewBox="0 0 20 20"><rect x="1" y="2.4" width="18" height="15.2" fill="#f4f4f4"/><path d="M1 10L10 17.6L19 10V17.6H1Z" fill="#181818"/><path d="M1 9.6L10 16.8L19 9.6" fill="none" stroke="#181818" stroke-width="1.6"/><circle cx="10" cy="8" r="2.6" fill="#e02020"/></svg>
<svg style="left:346.20px;top:483.20px;" width="16.00" height="16.00" viewBox="0 0 20 20"><rect x="1" y="2" width="18" height="16" rx="1.4" fill="#d82028"/><ellipse cx="8.4" cy="10.4" rx="4.6" ry="3.4" fill="none" stroke="#fff" stroke-width="1.3"/><ellipse cx="12.4" cy="9.6" rx="3.8" ry="3" fill="none" stroke="#fff" stroke-width="1.3"/></svg>
<svg style="left:370.60px;top:483.20px;" width="16.00" height="16.00" viewBox="0 0 20 20"><rect x="1.6" y="2" width="16.8" height="16" fill="#2c1404" stroke="#f08c28" stroke-width="1.1"/><text x="10" y="14.6" font-family="Liberation Sans,sans-serif" font-weight="bold" font-size="11.4" text-anchor="middle" fill="#f49830">Ai</text></svg>
<svg style="left:395.00px;top:483.20px;" width="16.00" height="16.00" viewBox="0 0 20 20"><g fill="#c41c1c"><circle cx="10" cy="10" r="5"/><circle cx="5" cy="5" r="2.8"/><circle cx="15.4" cy="6" r="2.6"/><circle cx="4.8" cy="14.6" r="2.6"/><circle cx="14.8" cy="15" r="2.8"/><circle cx="16.8" cy="10.6" r="1.8"/><circle cx="9.4" cy="3.4" r="1.8"/></g><circle cx="8.4" cy="9" r="1.3" fill="#fff"/><circle cx="12" cy="9" r="1.3" fill="#fff"/><circle cx="10.6" cy="12.6" r="1.2" fill="#f8d838"/></svg>
<svg style="left:7.80px;top:455.40px;" width="13.20" height="13.20" viewBox="0 0 20 20"><defs><radialGradient id="og606" cx="50%" cy="35%" r="65%"><stop offset="0" stop-color="#8fd0f8"/><stop offset="0.55" stop-color="#2c78c8"/><stop offset="1" stop-color="#143c78"/></radialGradient></defs><circle cx="10" cy="10" r="9.4" fill="url(#og606)" stroke="#0c2858" stroke-width="0.6"/><path d="M5.2 6.6Q7.4 5.4 9.4 6.4L8.8 9.8Q6.8 8.8 4.6 10Z" fill="#e85c28"/><path d="M10.4 6.6Q12.6 7.6 14.8 6.4L14.2 9.8Q12 11 9.8 10Z" fill="#7cc83c"/><path d="M4.4 11Q6.6 9.8 8.6 10.8L8 14.2Q6 13.2 3.8 14.4Z" fill="#3c9ce8"/><path d="M9.6 11Q11.8 12 14 10.8L13.4 14.2Q11.2 15.4 9 14.4Z" fill="#f4c828"/></svg>
<svg style="left:31.40px;top:456.00px;" width="12.00" height="12.00" viewBox="0 0 20 20"><text x="10.4" y="18" font-family="Liberation Sans,sans-serif" font-weight="bold" font-size="29" text-anchor="middle" fill="#3cb4f0">e</text><ellipse cx="10" cy="10" rx="9.4" ry="3.6" transform="rotate(-32 10 10)" fill="none" stroke="#f4c838" stroke-width="1.4"/></svg>
<svg style="left:52.30px;top:456.00px;" width="12.00" height="12.00" viewBox="0 0 20 20"><path d="M2 4.4H8L9.4 3H16.6V6H2Z" fill="#e8d070"/><rect x="1.6" y="5.2" width="16.8" height="11.6" rx="0.8" fill="#f4e088"/><rect x="1.6" y="12" width="16.8" height="4.8" fill="#8cc0dc"/><rect x="3.4" y="4" width="12" height="3.4" fill="#fafaf4"/></svg>
<svg style="left:73.20px;top:456.00px;" width="12.00" height="12.00" viewBox="0 0 20 20"><rect x="3" y="2.6" width="14" height="14.8" rx="1.4" fill="#9cc4e4"/><rect x="4.6" y="3.6" width="11" height="12.8" rx="1" fill="#e87830"/><circle cx="10" cy="10" r="4.4" fill="#f4a050"/><path d="M8.4 7.2L13 10L8.4 12.8Z" fill="#fff"/></svg>
<svg style="left:94.10px;top:456.00px;" width="12.00" height="12.00" viewBox="0 0 20 20"><rect x="9.8" y="5" width="8.6" height="9.6" fill="#fff" stroke="#1874c8" stroke-width="0.8"/><path d="M10.2 5.6L14 9.6L18 5.4" fill="none" stroke="#1874c8" stroke-width="1.2"/><path d="M1.6 3.6L11.4 2V18L1.6 16.4Z" fill="#1470c4"/><text x="6.4" y="13.4" font-family="Liberation Sans,sans-serif" font-weight="bold" font-size="9.6" text-anchor="middle" fill="#fff">O</text></svg>
<svg style="left:115.00px;top:456.00px;" width="12.00" height="12.00" viewBox="0 0 20 20"><rect x="9.4" y="4" width="8.6" height="12" fill="#fff" stroke="#1c7c40" stroke-width="1"/><path d="M11.6 6.6H16.4M11.6 9H16.4M11.6 11.4H16.4M11.6 13.6H16.4" stroke="#1c7c40" stroke-width="0.9"/><path d="M1.6 3.6L11.4 2V18L1.6 16.4Z" fill="#1c7c40"/><text x="6.4" y="13.4" font-family="Liberation Sans,sans-serif" font-weight="bold" font-size="9.4" text-anchor="middle" fill="#fff">X</text></svg>
<svg style="left:135.90px;top:456.00px;" width="12.00" height="12.00" viewBox="0 0 20 20"><rect x="9.4" y="4" width="8.6" height="12" fill="#fff" stroke="#2858a8" stroke-width="1"/><path d="M11.6 6.6H16.4M11.6 9H16.4M11.6 11.4H16.4M11.6 13.6H16.4" stroke="#2858a8" stroke-width="0.9"/><path d="M1.6 3.6L11.4 2V18L1.6 16.4Z" fill="#2858a8"/><text x="6.4" y="13.4" font-family="Liberation Sans,sans-serif" font-weight="bold" font-size="9.4" text-anchor="middle" fill="#fff">W</text></svg>
<svg style="left:706.00px;top:489.40px;" width="5" height="4" viewBox="0 0 5 4"><path d="M0.6 3L2.4 0.8L4.2 3Z" fill="#e8e8e8"/></svg>
<svg style="left:716.50px;top:487.00px;" width="8" height="8" viewBox="0 0 8 8"><path d="M1 0.6V7.6" stroke="#f0f0f0" stroke-width="0.8"/><path d="M1.4 1C3 0.2 4.4 2 6.8 1V4.6C4.4 5.6 3 3.8 1.4 4.6Z" fill="#f4f4f4"/></svg>
<svg style="left:729.00px;top:486.40px;" width="8" height="9" viewBox="0 0 8 9"><rect x="0.8" y="2.2" width="5.4" height="6" fill="none" stroke="#f0f0f0" stroke-width="0.9"/><rect x="2" y="0.8" width="3" height="1.4" fill="#f0f0f0"/><rect x="1.8" y="4.6" width="3.4" height="3" fill="#f0f0f0"/><path d="M5.6 1V4M7 1.6V3.4" stroke="#f0f0f0" stroke-width="0.8"/></svg>
<svg style="left:741.50px;top:487.40px;" width="8" height="8" viewBox="0 0 8 8"><path d="M0.4 6.6L6.8 6.6L6.8 0.6Z" fill="#8ca0d0"/><path d="M0.8 6.4V5.4M2.4 6.4V4.2M4 6.4V3M5.6 6.4V1.6" stroke="#f4f4f4" stroke-width="0.9"/></svg>
<svg style="left:751.50px;top:487.00px;" width="9" height="9" viewBox="0 0 9 9"><path d="M0.6 3H2.4L4.8 0.8V8L2.4 5.8H0.6Z" fill="#f4f4f4"/><circle cx="6.4" cy="6.4" r="1.6" fill="#e02828"/></svg>
<div class="t" style="left:767.40px;top:484.04px;height:6.72px;line-height:6.72px;font-size:5.6px;color:#f4f4f4;transform:scaleX(0.989);">10:56 AM</div>
<div class="t" style="left:769.40px;top:491.84px;height:6.72px;line-height:6.72px;font-size:5.6px;color:#f4f4f4;transform:scaleX(0.945);">5/8/2017</div>
<div style="left:795.40px;top:482.00px;width:4.60px;height:18.00px;background:linear-gradient(90deg,rgba(120,150,220,.5),rgba(60,90,180,.3));border-left:0.5px solid rgba(180,200,240,.5);"></div>
<svg style="left:1.20px;top:60.20px;" width="10" height="10" viewBox="0 0 10 10"><path d="M2 1L8.4 5.6L5.2 6.2L3.4 9Z" fill="none" stroke="#dcdcdc" stroke-width="0.9" stroke-linecap="round" stroke-linejoin="round"/></svg>
<svg style="left:15.80px;top:60.20px;" width="10" height="10" viewBox="0 0 10 10"><path d="M1.6 1L7.6 5.4L4.8 6L3 8.8Z" fill="#dcdcdc"/><path d="M7.6 0.6V3.4M6.2 2H9" fill="none" stroke="#dcdcdc" stroke-width="0.9" stroke-linecap="round" stroke-linejoin="round"/></svg>
<svg style="left:25.20px;top:68.60px;" width="2" height="2" viewBox="0 0 2 2"><path d="M1.8 0.2V1.8H0.2Z" fill="#c8c8c8"/></svg>
<svg style="left:1.20px;top:72.00px;" width="10" height="10" viewBox="0 0 10 10"><path d="M1.2 9L6.2 3.6" fill="none" stroke="#dcdcdc" stroke-width="1.2" stroke-linecap="round" stroke-linejoin="round"/><path d="M7.4 0.8V3M6.3 1.9H8.5M8.8 3.8V5M8.2 4.4H9.4M3.6 1V2.2M3 1.6H4.2" fill="none" stroke="#dcdcdc" stroke-width="0.6" stroke-linecap="round" stroke-linejoin="round"/></svg>
<svg style="left:15.80px;top:72.00px;" width="10" height="10" viewBox="0 0 10 10"><path d="M4.6 6.2C1.6 6 0.6 4.4 1.2 3C2 1.2 5.6 0.8 7.6 2C9.2 3 9 4.8 7.6 5.6" fill="none" stroke="#dcdcdc" stroke-width="0.9" stroke-linecap="round" stroke-linejoin="round"/><path d="M4.4 4.2L8.4 6.8L6.4 7.2L5.6 9Z" fill="#dcdcdc"/><circle cx="3.4" cy="7" r="1" fill="none" stroke="#dcdcdc" stroke-width="0.7" stroke-linecap="round" stroke-linejoin="round"/></svg>
<svg style="left:1.20px;top:85.00px;" width="10" height="10" viewBox="0 0 10 10"><path d="M6.4 1L9 3.6L7.6 5L5 2.4Z" fill="#dcdcdc"/><path d="M4.6 2.8L7.2 5.4L4.4 8.2L1.2 8.8L1.8 5.6Z" fill="#dcdcdc"/><circle cx="3.6" cy="6.4" r="0.7" fill="#535353"/></svg>
<svg style="left:10.60px;top:93.40px;" width="2" height="2" viewBox="0 0 2 2"><path d="M1.8 0.2V1.8H0.2Z" fill="#c8c8c8"/></svg>
<svg style="left:15.80px;top:85.00px;" width="10" height="10" viewBox="0 0 10 10"><g transform="translate(1.6,0) scale(0.86)"><path d="M6.4 1L9 3.6L7.6 5L5 2.4Z" fill="#dcdcdc"/><path d="M4.6 2.8L7.2 5.4L4.4 8.2L1.2 8.8L1.8 5.6Z" fill="#dcdcdc"/><circle cx="3.6" cy="6.4" r="0.7" fill="#535353"/></g><path d="M1 3C0.4 6 1 8.6 2.8 9" fill="none" stroke="#dcdcdc" stroke-width="0.8" stroke-linecap="round" stroke-linejoin="round"/></svg>
<svg style="left:1.20px;top:96.40px;" width="10" height="10" viewBox="0 0 10 10"><text x="5" y="8.6" font-family="Liberation Serif,serif" font-size="10.5" text-anchor="middle" fill="#dcdcdc">T</text></svg>
<svg style="left:10.60px;top:104.80px;" width="2" height="2" viewBox="0 0 2 2"><path d="M1.8 0.2V1.8H0.2Z" fill="#c8c8c8"/></svg>
<svg style="left:15.80px;top:96.40px;" width="10" height="10" viewBox="0 0 10 10"><path d="M1.4 8.6L8.6 1.4" fill="none" stroke="#dcdcdc" stroke-width="0.9" stroke-linecap="round" stroke-linejoin="round"/></svg>
<svg style="left:25.20px;top:104.80px;" width="2" height="2" viewBox="0 0 2 2"><path d="M1.8 0.2V1.8H0.2Z" fill="#c8c8c8"/></svg>
<svg style="left:1.20px;top:107.60px;" width="10" height="10" viewBox="0 0 10 10"><rect x="1" y="1.8" width="8" height="6.4" fill="#777" stroke="#dcdcdc" stroke-width="0.8"/></svg>
<svg style="left:10.60px;top:116.00px;" width="2" height="2" viewBox="0 0 2 2"><path d="M1.8 0.2V1.8H0.2Z" fill="#c8c8c8"/></svg>
<svg style="left:15.80px;top:107.60px;" width="10" height="10" viewBox="0 0 10 10"><path d="M8.8 0.8L4.6 5.4L5.6 6.4L9.4 1.6Z" fill="#dcdcdc"/><path d="M4 6C2.6 6 2.6 7.8 1 8.6C2.6 9.4 5 8.6 5 7Z" fill="#dcdcdc"/></svg>
<svg style="left:25.20px;top:116.00px;" width="2" height="2" viewBox="0 0 2 2"><path d="M1.8 0.2V1.8H0.2Z" fill="#c8c8c8"/></svg>
<svg style="left:1.20px;top:119.00px;" width="10" height="10" viewBox="0 0 10 10"><circle cx="3.6" cy="5.4" r="2.8" fill="none" stroke="#dcdcdc" stroke-width="0.9" stroke-linecap="round" stroke-linejoin="round"/><path d="M3.6 7.2L8.8 1.6" fill="none" stroke="#dcdcdc" stroke-width="1.4" stroke-linecap="round" stroke-linejoin="round"/></svg>
<svg style="left:10.60px;top:127.40px;" width="2" height="2" viewBox="0 0 2 2"><path d="M1.8 0.2V1.8H0.2Z" fill="#c8c8c8"/></svg>
<svg style="left:15.80px;top:119.00px;" width="10" height="10" viewBox="0 0 10 10"><path d="M5.6 1L9.4 4.8L5.6 8.6H3.2L1 6.4Z" fill="#dcdcdc"/><path d="M3.4 3.6L7 7.2" stroke="#535353" stroke-width="0.7"/></svg>
<svg style="left:25.20px;top:127.40px;" width="2" height="2" viewBox="0 0 2 2"><path d="M1.8 0.2V1.8H0.2Z" fill="#c8c8c8"/></svg>
<svg style="left:1.20px;top:132.60px;" width="10" height="10" viewBox="0 0 10 10"><path d="M2.2 6.8A3.4 3.4 0 1 0 2.6 3" fill="none" stroke="#dcdcdc" stroke-width="0.9" stroke-linecap="round" stroke-linejoin="round"/><path d="M1 1.6V4.2H3.6Z" fill="#dcdcdc"/></svg>
<svg style="left:10.60px;top:141.00px;" width="2" height="2" viewBox="0 0 2 2"><path d="M1.8 0.2V1.8H0.2Z" fill="#c8c8c8"/></svg>
<svg style="left:15.80px;top:132.60px;" width="10" height="10" viewBox="0 0 10 10"><rect x="1" y="4.2" width="4.8" height="4.6" fill="none" stroke="#dcdcdc" stroke-width="0.8" stroke-linecap="round" stroke-linejoin="round"/><rect x="3.2" y="1.2" width="6" height="5.4" fill="none" stroke="#dcdcdc" stroke-width="0.8" stroke-linecap="round" stroke-linejoin="round"/><path d="M5.6 4.4L8.2 2M6.4 2H8.2V3.8" fill="none" stroke="#dcdcdc" stroke-width="0.6" stroke-linecap="round" stroke-linejoin="round"/></svg>
<svg style="left:25.20px;top:141.00px;" width="2" height="2" viewBox="0 0 2 2"><path d="M1.8 0.2V1.8H0.2Z" fill="#c8c8c8"/></svg>
<svg style="left:1.20px;top:143.80px;" width="10" height="10" viewBox="0 0 10 10"><path d="M1 7.4C3 7.4 3.4 4 5 4C6.6 4 7 7.4 9 7.4M1 8.4H9" fill="none" stroke="#dcdcdc" stroke-width="0.8" stroke-linecap="round" stroke-linejoin="round"/><path d="M3 1L5 3.4L7 1Z" fill="#dcdcdc"/><path d="M5 3.4V7" fill="none" stroke="#dcdcdc" stroke-width="0.7" stroke-linecap="round" stroke-linejoin="round"/></svg>
<svg style="left:10.60px;top:152.20px;" width="2" height="2" viewBox="0 0 2 2"><path d="M1.8 0.2V1.8H0.2Z" fill="#c8c8c8"/></svg>
<svg style="left:15.80px;top:143.80px;" width="10" height="10" viewBox="0 0 10 10"><rect x="2.6" y="2" width="5.8" height="6" fill="none" stroke="#dcdcdc" stroke-width="0.7" stroke-linecap="round" stroke-linejoin="round"/><g fill="#dcdcdc"><rect x="1.8" y="1.2" width="1.6" height="1.6"/><rect x="7.6" y="1.2" width="1.6" height="1.6"/><rect x="1.8" y="7.2" width="1.6" height="1.6"/><rect x="7.6" y="7.2" width="1.6" height="1.6"/></g><path d="M0.6 3.6L3.6 5.6L0.6 7.6Z" fill="#dcdcdc"/></svg>
<svg style="left:25.20px;top:152.20px;" width="2" height="2" viewBox="0 0 2 2"><path d="M1.8 0.2V1.8H0.2Z" fill="#c8c8c8"/></svg>
<svg style="left:1.20px;top:155.40px;" width="10" height="10" viewBox="0 0 10 10"><circle cx="3.4" cy="4" r="2.6" fill="none" stroke="#dcdcdc" stroke-width="0.8" stroke-linecap="round" stroke-linejoin="round"/><circle cx="6" cy="4.4" r="2.6" fill="none" stroke="#dcdcdc" stroke-width="0.8" stroke-linecap="round" stroke-linejoin="round"/><path d="M5 5.4L9 8L7 8.4L6.2 9.8Z" fill="#dcdcdc"/></svg>
<svg style="left:10.60px;top:163.80px;" width="2" height="2" viewBox="0 0 2 2"><path d="M1.8 0.2V1.8H0.2Z" fill="#c8c8c8"/></svg>
<svg style="left:15.80px;top:155.40px;" width="10" height="10" viewBox="0 0 10 10"><path d="M1 1.2V8.6L9 9.4M1 1.2L9 9.4M1 3.6L6.8 7.2M1 6L4.2 7.2M3.4 3.6V9M5.8 6V9.2" fill="none" stroke="#dcdcdc" stroke-width="0.6" stroke-linecap="round" stroke-linejoin="round"/></svg>
<svg style="left:25.20px;top:163.80px;" width="2" height="2" viewBox="0 0 2 2"><path d="M1.8 0.2V1.8H0.2Z" fill="#c8c8c8"/></svg>
<svg style="left:1.20px;top:168.60px;" width="10" height="10" viewBox="0 0 10 10"><rect x="1" y="1" width="8" height="8" fill="none" stroke="#dcdcdc" stroke-width="0.8" stroke-linecap="round" stroke-linejoin="round"/><path d="M1 3.8C3.6 3 6 4.6 9 3.6M1 6.4C3.6 5.6 6 7.2 9 6.2M3.6 1C3 3.6 4.4 6 3.6 9M6.4 1C5.8 3.6 7.2 6 6.4 9" fill="none" stroke="#dcdcdc" stroke-width="0.6" stroke-linecap="round" stroke-linejoin="round"/></svg>
<svg style="left:16.40px;top:169.40px;" width="9" height="9" viewBox="0 0 9 9"><defs><linearGradient id="tg1"><stop offset="0" stop-color="#4a4a4a"/><stop offset="1" stop-color="#f0f0f0"/></linearGradient></defs><rect x="0.4" y="0.4" width="8" height="8" fill="url(#tg1)" stroke="#cfcfcf" stroke-width="0.6"/></svg>
<svg style="left:1.20px;top:179.80px;" width="10" height="10" viewBox="0 0 10 10"><path d="M1.2 8.8L1.8 6.8L5.8 2.8L7.2 4.2L3.2 8.2Z" fill="#dcdcdc"/><path d="M6 1.8L8.2 4M6.8 0.8L9.2 3.2" fill="none" stroke="#dcdcdc" stroke-width="1.2" stroke-linecap="round" stroke-linejoin="round"/></svg>
<svg style="left:10.60px;top:188.20px;" width="2" height="2" viewBox="0 0 2 2"><path d="M1.8 0.2V1.8H0.2Z" fill="#c8c8c8"/></svg>
<svg style="left:15.80px;top:179.80px;" width="10" height="10" viewBox="0 0 10 10"><rect x="0.8" y="2" width="4" height="4" rx="0.6" fill="#dcdcdc"/><circle cx="6.8" cy="6.2" r="2.4" fill="#9a9a9a" stroke="#dcdcdc" stroke-width="0.7"/><path d="M3.4 4.6L6 6" fill="none" stroke="#dcdcdc" stroke-width="0.7" stroke-linecap="round" stroke-linejoin="round"/></svg>
<svg style="left:25.20px;top:188.20px;" width="2" height="2" viewBox="0 0 2 2"><path d="M1.8 0.2V1.8H0.2Z" fill="#c8c8c8"/></svg>
<svg style="left:1.20px;top:193.60px;" width="10" height="10" viewBox="0 0 10 10"><rect x="3.4" y="3.6" width="4.4" height="5.6" rx="0.6" fill="none" stroke="#dcdcdc" stroke-width="0.8" stroke-linecap="round" stroke-linejoin="round"/><rect x="4.4" y="1.6" width="2.4" height="2" fill="#dcdcdc"/><circle cx="5.6" cy="6.4" r="1.1" fill="none" stroke="#dcdcdc" stroke-width="0.6" stroke-linecap="round" stroke-linejoin="round"/><path d="M1 1.2H2M1 2.8H2.4M1.2 4.4H2" fill="none" stroke="#dcdcdc" stroke-width="0.6" stroke-linecap="round" stroke-linejoin="round"/></svg>
<svg style="left:10.60px;top:202.00px;" width="2" height="2" viewBox="0 0 2 2"><path d="M1.8 0.2V1.8H0.2Z" fill="#c8c8c8"/></svg>
<svg style="left:15.80px;top:193.60px;" width="10" height="10" viewBox="0 0 10 10"><path d="M1 0.8V9H9.4" fill="none" stroke="#dcdcdc" stroke-width="0.7" stroke-linecap="round" stroke-linejoin="round"/><g fill="#dcdcdc"><rect x="2.2" y="5" width="1.5" height="3.6"/><rect x="4.4" y="2" width="1.5" height="6.6"/><rect x="6.6" y="3.8" width="1.5" height="4.8"/></g></svg>
<svg style="left:25.20px;top:202.00px;" width="2" height="2" viewBox="0 0 2 2"><path d="M1.8 0.2V1.8H0.2Z" fill="#c8c8c8"/></svg>
<svg style="left:1.20px;top:206.60px;" width="10" height="10" viewBox="0 0 10 10"><path d="M3 0.8V9.2M0.8 3H9.2M0.8 7.6H7.4V1" fill="none" stroke="#dcdcdc" stroke-width="0.8" stroke-linecap="round" stroke-linejoin="round"/></svg>
<svg style="left:10.60px;top:215.00px;" width="2" height="2" viewBox="0 0 2 2"><path d="M1.8 0.2V1.8H0.2Z" fill="#c8c8c8"/></svg>
<svg style="left:15.80px;top:206.60px;" width="10" height="10" viewBox="0 0 10 10"><path d="M8.6 0.8L3.2 6.6L2 9L4.4 7.8L9.4 1.8Z" fill="#dcdcdc"/><path d="M5.6 3.4L7 4.8" stroke="#535353" stroke-width="0.6"/></svg>
<svg style="left:25.20px;top:215.00px;" width="2" height="2" viewBox="0 0 2 2"><path d="M1.8 0.2V1.8H0.2Z" fill="#c8c8c8"/></svg>
<svg style="left:1.20px;top:218.00px;" width="10" height="10" viewBox="0 0 10 10"><path d="M2.6 9.2L1 5.6L2 5L3.2 6.4V1.8H4.2V4.6V1H5.2V4.6V1.4H6.2V4.8V2.4H7.2V7L6.4 9.2Z" fill="#dcdcdc"/></svg>
<svg style="left:10.60px;top:226.40px;" width="2" height="2" viewBox="0 0 2 2"><path d="M1.8 0.2V1.8H0.2Z" fill="#c8c8c8"/></svg>
<svg style="left:15.80px;top:218.00px;" width="10" height="10" viewBox="0 0 10 10"><circle cx="4" cy="4" r="2.8" fill="none" stroke="#dcdcdc" stroke-width="0.9" stroke-linecap="round" stroke-linejoin="round"/><path d="M6.2 6.2L9 9" fill="none" stroke="#dcdcdc" stroke-width="1.3" stroke-linecap="round" stroke-linejoin="round"/></svg>
<div style="left:2.00px;top:83.40px;width:25.50px;height:0.50px;background:#4a4a4a;"></div>
<div style="left:2.00px;top:130.60px;width:25.50px;height:0.50px;background:#4a4a4a;"></div>
<div style="left:2.00px;top:178.60px;width:25.50px;height:0.50px;background:#4a4a4a;"></div>
<div style="left:2.00px;top:191.60px;width:25.50px;height:0.50px;background:#4a4a4a;"></div>
<div style="left:2.00px;top:205.00px;width:25.50px;height:0.50px;background:#4a4a4a;"></div>
<div style="left:0.00px;top:231.80px;width:15.20px;height:16.40px;background:#fcfcfc;"></div>
<svg style="left:0.00px;top:231.80px;" width="15.2" height="16.4" viewBox="0 0 15.2 16.4"><path d="M0 16.4L15.2 0" stroke="#d82020" stroke-width="0.8"/></svg>
<div style="left:7.80px;top:241.40px;width:15.60px;height:15.60px;background:#000;border:0.6px solid #9a9a9a;box-sizing:border-box;"></div>
<div style="left:12.00px;top:245.60px;width:7.20px;height:7.20px;background:#5c5c5c;border:0.5px solid #a0a0a0;box-sizing:border-box;"></div>
<svg style="left:18.60px;top:232.40px;" width="6" height="6" viewBox="0 0 6 6"><path d="M1 1.2C3.6 1 4.8 2.4 4.8 5" fill="none" stroke="#dcdcdc" stroke-width="0.8" stroke-linecap="round" stroke-linejoin="round"/><path d="M3.6 4L4.8 5.4L5.8 3.8" fill="none" stroke="#dcdcdc" stroke-width="0.7" stroke-linecap="round" stroke-linejoin="round"/><path d="M2.2 0.2L0.8 1.2L2.2 2.2" fill="none" stroke="#dcdcdc" stroke-width="0.7" stroke-linecap="round" stroke-linejoin="round"/></svg>
<div style="left:0.60px;top:252.60px;width:3.20px;height:3.20px;background:#fff;"></div>
<div style="left:2.40px;top:254.40px;width:3.20px;height:3.20px;background:#111;border:0.4px solid #ccc;box-sizing:border-box;"></div>
<div style="left:0.00px;top:261.60px;width:6.40px;height:7.20px;background:#0c0c0c;border:0.5px solid #888;box-sizing:border-box;"></div>
<div style="left:9.00px;top:262.00px;width:6.40px;height:6.60px;background:linear-gradient(90deg,#fff,#111);"></div>
<div style="left:18.60px;top:262.00px;width:6.20px;height:6.60px;background:#fff;"></div>
<svg style="left:18.60px;top:262.00px;" width="6.2" height="6.6" viewBox="0 0 6.2 6.6"><path d="M0.3 6.3L5.9 0.3" stroke="#d82020" stroke-width="0.9"/></svg>
<svg style="left:0.40px;top:273.00px;" width="7" height="7" viewBox="0 0 7 7"><rect x="2" y="2" width="4" height="4" fill="#e0e0e0"/><circle cx="2.6" cy="2.6" r="2" fill="#bdbdbd"/></svg>
<svg style="left:9.40px;top:273.00px;" width="7" height="7" viewBox="0 0 7 7"><rect x="2" y="2" width="4" height="4" fill="#8a8a8a"/><circle cx="2.6" cy="2.6" r="2" fill="#a8a8a8"/></svg>
<svg style="left:18.40px;top:273.00px;" width="7" height="7" viewBox="0 0 7 7"><circle cx="3.2" cy="3.4" r="2.2" fill="none" stroke="#707070" stroke-width="0.6"/></svg>
<svg style="left:6.60px;top:285.00px;" width="12" height="9" viewBox="0 0 12 9"><rect x="0.6" y="2.6" width="6.6" height="5.4" fill="#8a8a8a" stroke="#d0d0d0" stroke-width="0.7"/><rect x="3.6" y="0.6" width="7.4" height="5.4" fill="#777" stroke="#d0d0d0" stroke-width="0.7"/></svg>
<svg style="left:0.00px;top:0.00px;" width="800" height="500" viewBox="0 0 800 500"><path d="M51.70 59.6V64.6 M57.29 62.6V64.6 M62.88 61.8V64.6 M68.46 62.6V64.6 M74.05 59.6V64.6 M79.64 62.6V64.6 M85.23 61.8V64.6 M90.81 62.6V64.6 M96.40 59.6V64.6 M101.99 62.6V64.6 M107.58 61.8V64.6 M113.16 62.6V64.6 M118.75 59.6V64.6 M124.34 62.6V64.6 M129.93 61.8V64.6 M135.51 62.6V64.6 M141.10 59.6V64.6 M146.69 62.6V64.6 M152.28 61.8V64.6 M157.86 62.6V64.6 M163.45 59.6V64.6 M169.04 62.6V64.6 M174.63 61.8V64.6 M180.21 62.6V64.6 M185.80 59.6V64.6 M191.39 62.6V64.6 M196.98 61.8V64.6 M202.56 62.6V64.6 M208.15 59.6V64.6 M213.74 62.6V64.6 M219.33 61.8V64.6 M224.91 62.6V64.6 M230.50 59.6V64.6 M236.09 62.6V64.6 M241.68 61.8V64.6 M247.26 62.6V64.6 M252.85 59.6V64.6 M258.44 62.6V64.6 M264.03 61.8V64.6 M269.61 62.6V64.6 M275.20 59.6V64.6 M280.79 62.6V64.6 M286.38 61.8V64.6 M291.96 62.6V64.6 M297.55 59.6V64.6 M303.14 62.6V64.6 M308.73 61.8V64.6 M314.31 62.6V64.6 M319.90 59.6V64.6 M325.49 62.6V64.6 M331.07 61.8V64.6 M336.66 62.6V64.6 M342.25 59.6V64.6 M347.84 62.6V64.6 M353.43 61.8V64.6 M359.01 62.6V64.6 M364.60 59.6V64.6 M370.19 62.6V64.6 M375.78 61.8V64.6 M381.36 62.6V64.6 M386.95 59.6V64.6 M392.54 62.6V64.6 M398.13 61.8V64.6 M403.71 62.6V64.6 M409.30 59.6V64.6 M414.89 62.6V64.6 M420.48 61.8V64.6 M426.06 62.6V64.6 M431.65 59.6V64.6 M437.24 62.6V64.6 M442.82 61.8V64.6 M448.41 62.6V64.6 M454.00 59.6V64.6 M459.59 62.6V64.6 M465.18 61.8V64.6 M470.76 62.6V64.6 M476.35 59.6V64.6 M481.94 62.6V64.6 M487.53 61.8V64.6 M493.11 62.6V64.6 M498.70 59.6V64.6 M504.29 62.6V64.6 M509.88 61.8V64.6 M515.46 62.6V64.6 M521.05 59.6V64.6 M526.64 62.6V64.6 M532.23 61.8V64.6 M537.81 62.6V64.6 M543.40 59.6V64.6 M548.99 62.6V64.6 M554.57 61.8V64.6 M560.16 62.6V64.6 M565.75 59.6V64.6 M571.34 62.6V64.6 M576.92 61.8V64.6 M582.51 62.6V64.6 M588.10 59.6V64.6 M593.69 62.6V64.6 M599.27 61.8V64.6 M604.86 62.6V64.6 M610.45 59.6V64.6 M616.04 62.6V64.6 M621.62 61.8V64.6 M627.21 62.6V64.6 M632.80 59.6V64.6 M638.39 62.6V64.6 M31.2 69.70H35.8 M33.8 75.29H35.8 M33 80.88H35.8 M33.8 86.46H35.8 M31.2 92.05H35.8 M33.8 97.64H35.8 M33 103.23H35.8 M33.8 108.81H35.8 M31.2 114.40H35.8 M33.8 119.99H35.8 M33 125.58H35.8 M33.8 131.16H35.8 M31.2 136.75H35.8 M33.8 142.34H35.8 M33 147.93H35.8 M33.8 153.51H35.8 M31.2 159.10H35.8 M33.8 164.69H35.8 M33 170.28H35.8 M33.8 175.86H35.8 M31.2 181.45H35.8 M33.8 187.04H35.8 M33 192.63H35.8 M33.8 198.21H35.8 M31.2 203.80H35.8 M33.8 209.39H35.8 M33 214.98H35.8 M33.8 220.56H35.8 M31.2 226.15H35.8 M33.8 231.74H35.8 M33 237.33H35.8 M33.8 242.91H35.8 M31.2 248.50H35.8 M33.8 254.09H35.8 M33 259.68H35.8 M33.8 265.26H35.8 M31.2 270.85H35.8 M33.8 276.44H35.8 M33 282.03H35.8 M33.8 287.61H35.8 M31.2 293.20H35.8 M33.8 298.79H35.8 M33 304.38H35.8 M33.8 309.96H35.8 M31.2 315.55H35.8 M33.8 321.14H35.8 M33 326.73H35.8 M33.8 332.31H35.8 M31.2 337.90H35.8 M33.8 343.49H35.8 M33 349.07H35.8 M33.8 354.66H35.8 M31.2 360.25H35.8 M33.8 365.84H35.8 M33 371.43H35.8 M33.8 377.01H35.8 M31.2 382.60H35.8 M33.8 388.19H35.8 M33 393.78H35.8 M33.8 399.36H35.8 M31.2 404.95H35.8 M33.8 410.54H35.8 M33 416.13H35.8 M33.8 421.71H35.8 M31.2 427.30H35.8 M33.8 432.89H35.8 M33 438.48H35.8" stroke="#505050" stroke-width="0.35" fill="none"/><g font-family="Liberation Sans,sans-serif" font-size="3.2" fill="#868686"><text x="52.50" y="63.2">1</text><text x="74.85" y="63.2">½</text><text x="97.20" y="63.2">0</text><text x="119.55" y="63.2">½</text><text x="141.90" y="63.2">1</text><text x="164.25" y="63.2">1½</text><text x="186.60" y="63.2">2</text><text x="208.95" y="63.2">2½</text><text x="231.30" y="63.2">3</text><text x="253.65" y="63.2">3½</text><text x="276.00" y="63.2">4</text><text x="298.35" y="63.2">4½</text><text x="320.70" y="63.2">5</text><text x="343.05" y="63.2">5½</text><text x="365.40" y="63.2">6</text><text x="387.75" y="63.2">6½</text><text x="410.10" y="63.2">7</text><text x="432.45" y="63.2">7½</text><text x="454.80" y="63.2">8</text><text x="477.15" y="63.2">8½</text><text x="499.50" y="63.2">9</text><text x="521.85" y="63.2">9½</text><text x="544.20" y="63.2">10</text><text x="566.55" y="63.2">10½</text><text x="588.90" y="63.2">11</text><text x="611.25" y="63.2">11½</text><text x="633.60" y="63.2">12</text><text transform="translate(34.2 68.90) rotate(-90)">1</text><text transform="translate(34.2 91.25) rotate(-90)">½</text><text transform="translate(34.2 113.60) rotate(-90)">0</text><text transform="translate(34.2 135.95) rotate(-90)">½</text><text transform="translate(34.2 158.30) rotate(-90)">1</text><text transform="translate(34.2 180.65) rotate(-90)">1½</text><text transform="translate(34.2 203.00) rotate(-90)">2</text><text transform="translate(34.2 225.35) rotate(-90)">2½</text><text transform="translate(34.2 247.70) rotate(-90)">3</text><text transform="translate(34.2 270.05) rotate(-90)">3½</text><text transform="translate(34.2 292.40) rotate(-90)">4</text><text transform="translate(34.2 314.75) rotate(-90)">4½</text><text transform="translate(34.2 337.10) rotate(-90)">5</text><text transform="translate(34.2 359.45) rotate(-90)">5½</text><text transform="translate(34.2 381.80) rotate(-90)">6</text><text transform="translate(34.2 404.15) rotate(-90)">6½</text><text transform="translate(34.2 426.50) rotate(-90)">7</text></g></svg>
<div style="left:31.00px;top:59.40px;width:4.80px;height:5.20px;background:#333333;"></div>
</div></body></html>
